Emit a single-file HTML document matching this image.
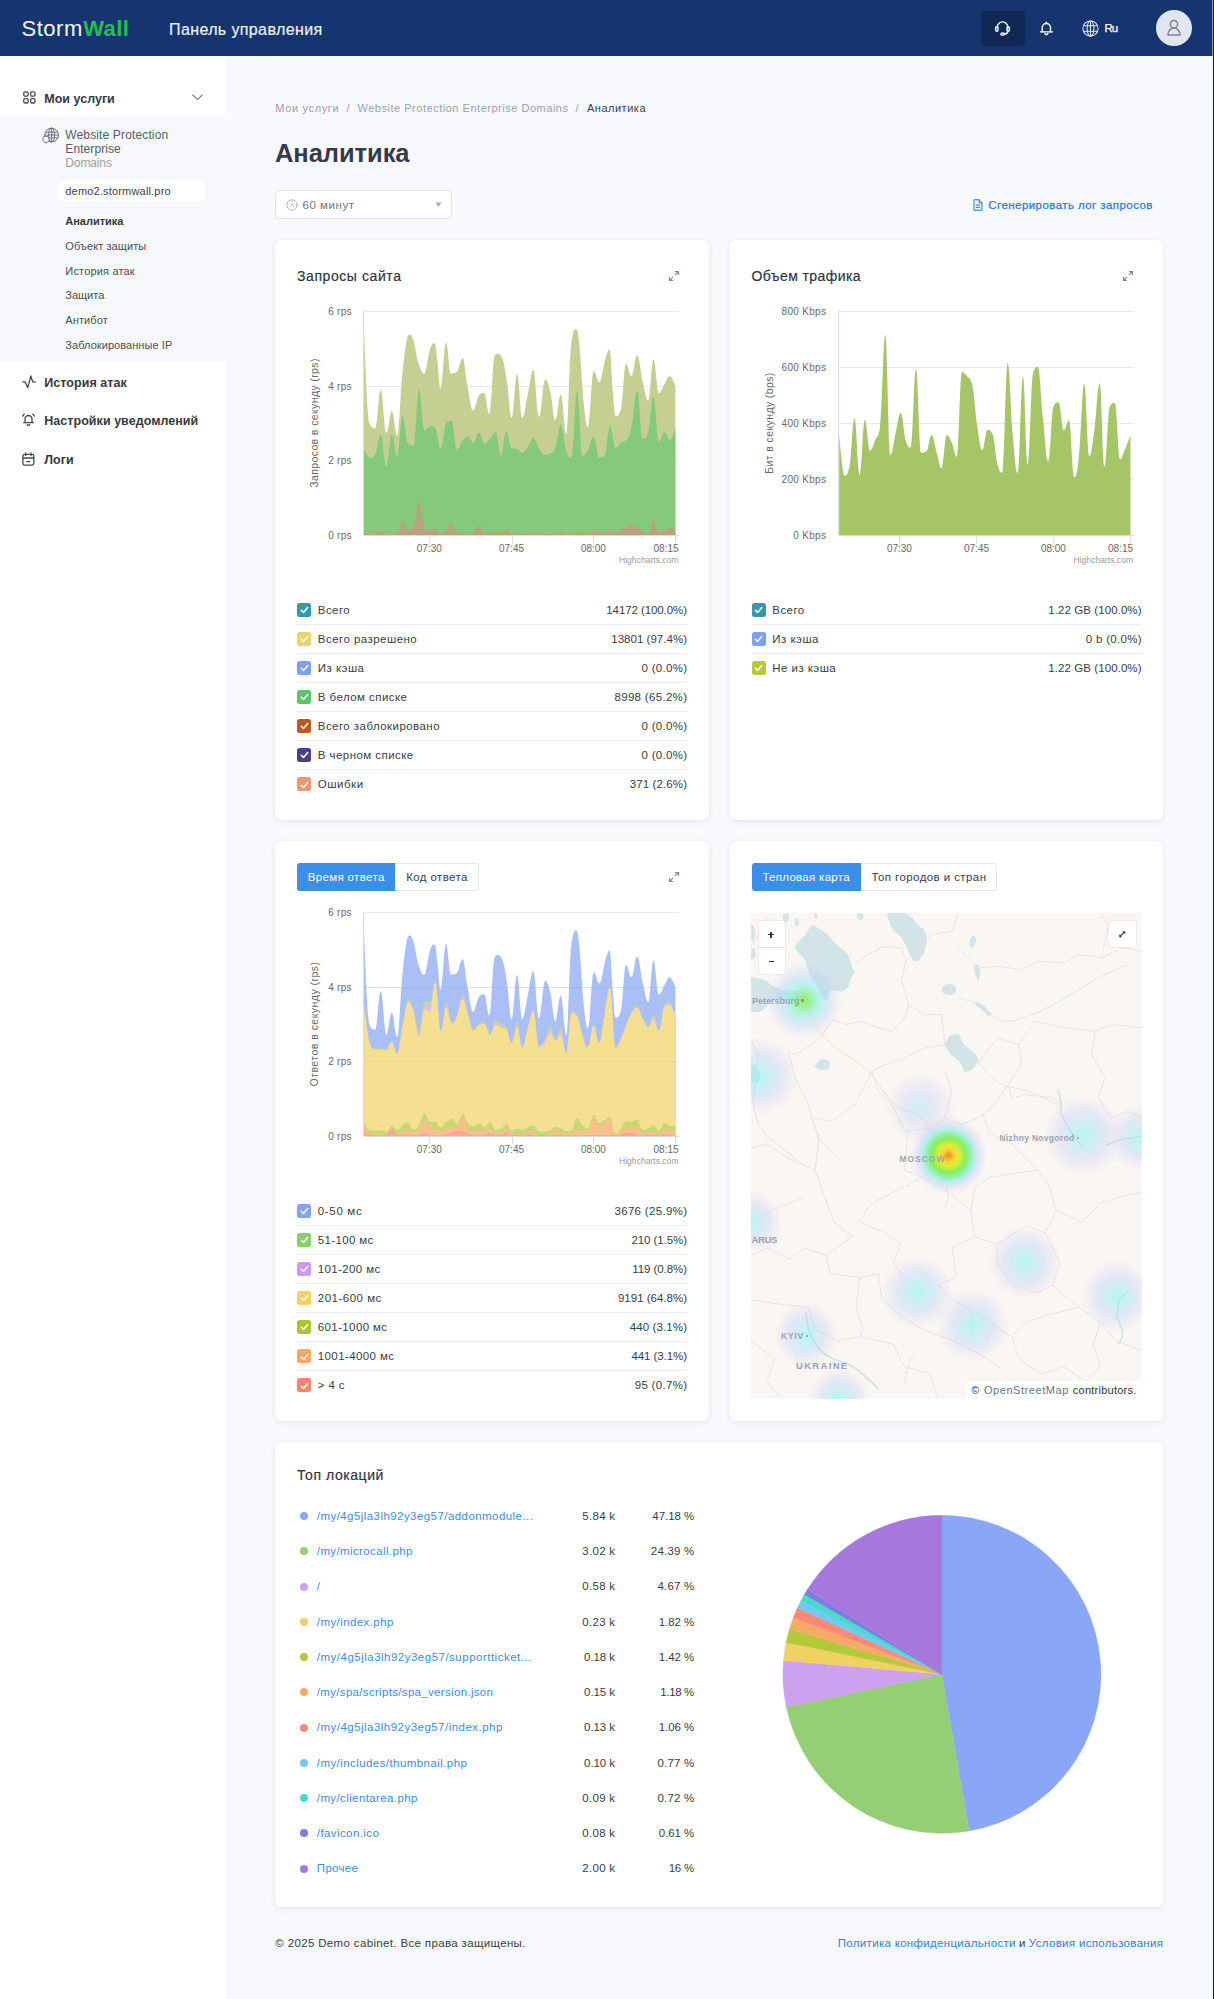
<!DOCTYPE html><html lang="ru"><head><meta charset="utf-8"><title>Аналитика</title><style>
*{box-sizing:border-box;margin:0;padding:0}
html,body{width:1214px;height:1999px;overflow:hidden;background:#f7f9fc;}
body{position:relative;font-family:"Liberation Sans",sans-serif;}
.t{position:absolute;white-space:nowrap;}
.b{position:absolute;}
svg{position:absolute;overflow:visible;}
.card{position:absolute;background:#fff;border-radius:6px;box-shadow:0 2px 6px rgba(60,80,130,.09),0 0 1px rgba(60,80,130,.10);}
</style></head><body>
<div class="b" style="left:0px;top:0px;width:1214px;height:56.3px;background:#16346f;"></div>
<div class="t" style="left:21.40px;top:13.90px;font-size:22px;line-height:29px;color:#f2f4f8;letter-spacing:0.565px;">Storm</div>
<div class="t" style="left:83.20px;top:13.90px;font-size:22px;line-height:29px;color:#1fc04f;font-weight:700;letter-spacing:0.398px;">Wall</div>
<div class="t" style="left:169.00px;top:18.90px;font-size:16px;line-height:21px;color:#eef1f7;letter-spacing:0.383px;-webkit-text-stroke:.2px #eef1f7;">Панель управления</div>
<div class="b" style="left:981px;top:11px;width:44px;height:35px;background:#112855;border-radius:4px;"></div>
<svg style="left:994px;top:20px" width="17" height="17" viewBox="0 0 17 17" fill="none" stroke="#fff" stroke-width="1.4" stroke-linecap="round" stroke-linejoin="round">
<path d="M3.2 8.2V7.2a5.3 5.3 0 0 1 10.6 0v1"/>
<rect x="1.6" y="6.6" width="2.4" height="4.6" rx="1.2"/>
<rect x="13" y="6.6" width="2.4" height="4.6" rx="1.2"/>
<path d="M13.8 11.2c0 1.6-1.4 2.6-3.4 2.8"/>
<ellipse cx="8.8" cy="14" rx="1.9" ry="1.1"/>
</svg>
<svg style="left:1037.8px;top:20px" width="17" height="17" viewBox="0 0 17 17" fill="none" stroke="#fff" stroke-width="1.4" stroke-linecap="round" stroke-linejoin="round">
<path d="M4.3 11.8V7.6a4.1 4.1 0 0 1 8.2 0v4.2"/>
<path d="M2.4 11.9h12"/>
<path d="M6.9 13.4a1.6 1.6 0 0 0 3 0"/>
<path d="M8.4 2.2v1.2"/>
</svg>
<svg style="left:1082px;top:19.5px" width="17" height="17" viewBox="0 0 17 17" fill="none" stroke="#e4e8f2" stroke-width="1.05">
<circle cx="8.5" cy="8.5" r="7.6"/>
<ellipse cx="8.5" cy="8.5" rx="3.4" ry="7.6"/>
<path d="M8.5 .9v15.2M1.5 5.7h14M1.5 11.3h14"/>
</svg>
<div class="t" style="left:1104.50px;top:21.20px;font-size:11.5px;line-height:15px;color:#fff;letter-spacing:-0.951px;-webkit-text-stroke:.25px #fff;">Ru</div>
<div class="b" style="left:1156px;top:10.4px;width:36px;height:36px;background:#e1e5ee;border-radius:50%;"></div>
<svg style="left:1165px;top:19.4px" width="18" height="18" viewBox="0 0 18 18" fill="none" stroke="#7c8492" stroke-width="1.5" stroke-linejoin="round">
<circle cx="9" cy="5.2" r="3.6"/>
<path d="M3 16.1c0-4.2 2.6-7.2 6-7.2s6 3 6 7.2z"/>
</svg>
<div class="b" style="left:1213px;top:56px;width:1px;height:1943px;background:#141b2e;"></div>
<div class="b" style="left:1212px;top:0px;width:1px;height:56px;background:#8f9fc4;"></div>
<div class="b" style="left:1213px;top:0px;width:1px;height:56px;background:#141b2e;"></div>
<div class="b" style="left:0px;top:56px;width:226px;height:1943px;background:#fff;"></div>
<div class="b" style="left:0px;top:116.5px;width:226px;height:245px;background:#f7f8fc;"></div>
<svg style="left:22.5px;top:91px" width="13" height="13" viewBox="0 0 13 13" fill="none" stroke="#444a57" stroke-width="1.3">
<rect x=".8" y=".8" width="4.3" height="4.3" rx="1.2"/><rect x="7.7" y=".8" width="4.3" height="4.3" rx="1.2"/>
<rect x=".8" y="7.7" width="4.3" height="4.3" rx="1.2"/><rect x="7.7" y="7.7" width="4.3" height="4.3" rx="1.2"/></svg>
<div class="t" style="left:44.30px;top:90.60px;font-size:12.5px;line-height:16px;color:#363940;font-weight:700;letter-spacing:0.008px;">Мои услуги</div>
<svg style="left:192px;top:93.5px" width="11" height="7" viewBox="0 0 11 7" fill="none" stroke="#777d8a" stroke-width="1.1" stroke-linecap="round" stroke-linejoin="round"><path d="M.8 1l4.7 4.6L10.2 1"/></svg>
<svg style="left:41.5px;top:127px" width="18" height="17" viewBox="0 0 18 17" fill="none" stroke="#6d7380" stroke-width="1">
<circle cx="9.6" cy="8" r="6.9"/><ellipse cx="9.6" cy="8" rx="3" ry="6.9"/>
<path d="M9.6 1.1v13.8M3.3 5.2h12.6M2.8 8h13.7M3.3 10.8h12.6"/>
<path d="M1 10.2l3-1 3 1v2.4c0 1.6-1.2 2.8-3 3.4-1.800-.6-3-1.800-3-3.400z" fill="#f7f8fc" stroke="#6d7380"/>
</svg>
<div class="t" style="left:65.30px;top:127.00px;font-size:12px;line-height:16px;color:#595c63;letter-spacing:0.139px;">Website Protection</div>
<div class="t" style="left:65.30px;top:140.50px;font-size:12px;line-height:16px;color:#595c63;letter-spacing:0.081px;">Enterprise</div>
<div class="t" style="left:65.30px;top:154.80px;font-size:12px;line-height:16px;color:#9d9fa6;letter-spacing:-0.122px;">Domains</div>
<div class="b" style="left:58px;top:180px;width:147px;height:21px;background:#fff;border-radius:4px;"></div>
<div class="t" style="left:65.30px;top:184.10px;font-size:11px;line-height:14px;color:#3e4046;letter-spacing:0.179px;">demo2.stormwall.pro</div>
<div class="t" style="left:65.30px;top:214.40px;font-size:11px;line-height:14px;color:#363940;font-weight:700;letter-spacing:-0.025px;">Аналитика</div>
<div class="t" style="left:65.30px;top:238.90px;font-size:11px;line-height:14px;color:#4c4e55;letter-spacing:0.091px;">Объект защиты</div>
<div class="t" style="left:65.30px;top:263.70px;font-size:11px;line-height:14px;color:#4c4e55;letter-spacing:0.172px;">История атак</div>
<div class="t" style="left:65.30px;top:288.40px;font-size:11px;line-height:14px;color:#4c4e55;">Защита</div>
<div class="t" style="left:65.30px;top:313.10px;font-size:11px;line-height:14px;color:#4c4e55;letter-spacing:0.099px;">Антибот</div>
<div class="t" style="left:65.30px;top:337.90px;font-size:11px;line-height:14px;color:#4c4e55;letter-spacing:0.062px;">Заблокированные IP</div>
<svg style="left:22px;top:374.5px" width="15" height="14" viewBox="0 0 15 14" fill="none" stroke="#444a57" stroke-width="1.3" stroke-linecap="round" stroke-linejoin="round"><path d="M.8 6.900H3L5.900 12.600 8.800 1 10.700 6.900h2.500"/></svg>
<div class="t" style="left:44.30px;top:374.60px;font-size:12.5px;line-height:16px;color:#363940;font-weight:700;letter-spacing:0.050px;">История атак</div>
<svg style="left:21px;top:412.3px" width="15" height="15" viewBox="0 0 15 15" fill="none" stroke="#444a57" stroke-width="1.3" stroke-linecap="round" stroke-linejoin="round">
<path d="M4 10.6V7a3.500 3.500 0 0 1 7 0v3.600"/><path d="M2.700 10.700h9.600"/><path d="M6.200 12.600a1.400 1.400 0 0 0 2.600 0"/><path d="M1.700 4l1.500-1.900M13.300 4l-1.500-1.900"/></svg>
<div class="t" style="left:44.30px;top:413.30px;font-size:12.5px;line-height:16px;color:#363940;font-weight:700;letter-spacing:0.041px;">Настройки уведомлений</div>
<svg style="left:22.3px;top:451.800px" width="13" height="14" viewBox="0 0 13 14" fill="none" stroke="#444a57" stroke-width="1.3" stroke-linecap="round" stroke-linejoin="round">
<rect x=".9" y="2.300" width="10.900" height="10.800" rx="1.800"/><path d="M.9 6h10.900M3.700 .8v2.600M9 .8v2.600M4.800 9.600h3"/></svg>
<div class="t" style="left:44.30px;top:452.00px;font-size:12.5px;line-height:16px;color:#363940;font-weight:700;letter-spacing:0.051px;">Логи</div>
<div class="t" style="left:275.30px;top:100.60px;font-size:11px;line-height:14px;color:#9ba1ad;letter-spacing:0.644px;">Мои услуги</div>
<div class="t" style="left:346.50px;top:100.60px;font-size:11px;line-height:14px;color:#9ba1ad;">/</div>
<div class="t" style="left:357.50px;top:100.60px;font-size:11px;line-height:14px;color:#9ba1ad;letter-spacing:0.520px;">Website Protection Enterprise Domains</div>
<div class="t" style="left:575.50px;top:100.60px;font-size:11px;line-height:14px;color:#9ba1ad;">/</div>
<div class="t" style="left:587.00px;top:100.60px;font-size:11px;line-height:14px;color:#3c4250;letter-spacing:0.506px;">Аналитика</div>
<div class="t" style="left:275.00px;top:137.30px;font-size:25.5px;line-height:33px;color:#343a49;font-weight:700;letter-spacing:-0.054px;">Аналитика</div>
<div class="b" style="left:275px;top:190px;width:176.5px;height:28.5px;background:#fff;border:1px solid #dbe5f9;border-radius:4px;"></div>
<svg style="left:286px;top:198.500px" width="12" height="12" viewBox="0 0 12 12" fill="none" stroke="#b0b4bd" stroke-width="1" stroke-linecap="round"><circle cx="6" cy="6" r="5.200"/><path d="M6 3.200V6l1.900 1.300"/></svg>
<div class="t" style="left:302.50px;top:197.90px;font-size:11.5px;line-height:15px;color:#70747e;letter-spacing:0.539px;">60 минут</div>
<svg style="left:434.500px;top:202px" width="7" height="5.500" viewBox="0 0 8 6"><path d="M.3 .3h7.400L4 5.700z" fill="#aeb2ba"/></svg>
<svg style="left:972.500px;top:198.500px" width="10" height="12" viewBox="0 0 10 12" fill="none" stroke="#1f70d2" stroke-width="1" stroke-linejoin="round"><path d="M1 .8h5.200L9 3.600v7.600H1z"/><path d="M6 .8v3h3M2.800 6h4.400M2.800 8.300h4.400"/></svg>
<div class="t" style="left:988.33px;top:197.50px;font-size:11.5px;line-height:15px;color:#2b7ad9;letter-spacing:0.432px;-webkit-text-stroke:.25px #2b7ad9;">Сгенерировать лог запросов</div>
<div class="card" style="left:275px;top:240px;width:433.5px;height:580px"></div>
<div class="card" style="left:730px;top:240px;width:433px;height:580px"></div>
<div class="card" style="left:275px;top:841px;width:433.5px;height:579.5px"></div>
<div class="card" style="left:730px;top:841px;width:433px;height:579.5px"></div>
<div class="card" style="left:275px;top:1442px;width:888px;height:465px"></div>
<div class="t" style="left:297.00px;top:266.60px;font-size:14px;line-height:18px;color:#2e3442;letter-spacing:0.577px;-webkit-text-stroke:.18px #2e3442;">Запросы сайта</div>
<svg style="left:667.5px;top:269.5px" width="12" height="12" viewBox="0 0 12 12" fill="none" stroke="#868d9a" stroke-width="1.15" stroke-linecap="round" stroke-linejoin="round"><path d="M7.300 1.500h3.200v3.200M10.300 1.700L7.100 4.900M4.700 10.500H1.500V7.300M1.700 10.300L4.900 7.100"/><path d="M10.500 1.500L8.200 1.700 10.300 3.800zM1.500 10.500L3.800 10.300 1.700 8.200z" fill="#868d9a" stroke-width=".6"/></svg>
<svg style="left:0;top:0" width="1214" height="1999"><path d="M364 311.5H679" stroke="#e9e9e9" stroke-width="1"/><path d="M364 386.5H679" stroke="#e9e9e9" stroke-width="1"/><path d="M364 460.5H679" stroke="#e9e9e9" stroke-width="1"/><path d="M364 535.5H679" stroke="#d3dcef" stroke-width="1"/><path d="M363.5 311V535" stroke="#d3dcef" stroke-width="1"/><path d="M429.5 535v8" stroke="#d3dcef" stroke-width="1"/><path d="M512.5 535v8" stroke="#d3dcef" stroke-width="1"/><path d="M593.5 535v8" stroke="#d3dcef" stroke-width="1"/><path d="M675.5 535v8" stroke="#d3dcef" stroke-width="1"/></svg>
<div class="t" style="left:328.20px;top:305.10px;font-size:10px;line-height:13px;color:#686868;letter-spacing:0.267px;">6 rps</div>
<div class="t" style="left:328.20px;top:379.77px;font-size:10px;line-height:13px;color:#686868;letter-spacing:0.267px;">4 rps</div>
<div class="t" style="left:328.20px;top:454.43px;font-size:10px;line-height:13px;color:#686868;letter-spacing:0.267px;">2 rps</div>
<div class="t" style="left:328.20px;top:529.10px;font-size:10px;line-height:13px;color:#686868;letter-spacing:0.267px;">0 rps</div>
<div class="t" style="left:416.80px;top:541.50px;font-size:10px;line-height:13px;color:#686868;">07:30</div>
<div class="t" style="left:499.00px;top:541.50px;font-size:10px;line-height:13px;color:#686868;">07:45</div>
<div class="t" style="left:580.90px;top:541.50px;font-size:10px;line-height:13px;color:#686868;">08:00</div>
<div class="t" style="left:653.50px;top:541.50px;font-size:10px;line-height:13px;color:#686868;">08:15</div>
<div class="t" style="left:619.03px;top:555.00px;font-size:8.5px;line-height:11px;color:#9a9a9a;letter-spacing:0.032px;">Highcharts.com</div>
<div class="t" style="left:244.4px;top:416.0px;width:140px;text-align:center;font-size:10.5px;line-height:14px;color:#686868;transform:rotate(-90deg);letter-spacing:0.38px">Запросов в секунду (rps)</div>
<svg style="left:0;top:0" width="1214" height="1999"><path d="M364.1 326.7 C364.1 326.7 367.2 417.9 369.3 423.1 C371.6 428.3 372.8 428.3 375.2 428.3 C377.4 428.3 378.5 389.7 380.7 389.7 C382.9 389.7 384.1 433.4 386.3 433.4 C388.5 433.4 389.6 411.2 391.8 411.2 C393.9 411.2 395.0 435.7 397.1 435.7 C399.3 435.7 400.4 389.4 402.6 371.2 C405.3 348.9 406.6 334.4 409.3 334.4 C411.1 334.4 412.0 335.9 413.8 341.5 C415.5 347.1 416.4 356.8 418.2 362.3 C420.6 369.6 421.8 373.7 424.1 373.7 C426.5 373.7 427.7 355.7 430.1 348.9 C432.0 343.5 432.9 343.3 434.8 343.3 C435.9 343.3 436.4 353.7 437.5 362.3 C438.7 371.8 439.3 388.5 440.4 388.5 C442.7 388.5 443.8 342.6 446.1 342.6 C448.0 342.6 448.9 373.4 450.8 373.4 C453.2 373.4 454.4 373.4 456.8 371.9 C459.1 370.4 460.3 358.1 462.7 358.1 C464.5 358.1 465.4 374.1 467.1 383.0 C469.5 395.0 470.7 410.5 473.1 410.5 C475.4 410.5 476.6 398.2 479.0 395.6 C481.1 393.1 482.1 393.1 484.2 393.1 C486.3 393.1 487.3 414.2 489.4 414.2 C491.4 414.2 492.5 359.0 494.6 356.3 C495.5 353.7 495.9 353.7 496.8 353.7 C499.2 353.7 500.3 353.7 502.7 359.3 C504.5 364.9 505.4 371.3 507.2 383.0 C508.9 394.7 509.8 417.9 511.6 417.9 C513.8 417.9 514.9 373.7 517.1 373.7 C519.1 373.7 520.2 417.9 522.2 417.9 C524.4 417.9 525.5 404.3 527.7 394.9 C530.0 385.2 531.1 370.0 533.3 370.0 C535.6 370.0 536.7 417.1 539.0 417.1 C541.5 417.1 542.7 379.6 545.2 379.6 C547.3 379.6 548.3 383.6 550.4 391.9 C552.4 399.8 553.3 420.1 555.3 420.1 C557.5 420.1 558.6 394.4 560.8 394.4 C563.0 394.4 564.1 434.2 566.3 434.2 C568.2 434.2 569.2 359.8 571.2 344.5 C573.2 329.2 574.3 329.2 576.3 329.2 C577.5 329.2 578.1 332.5 579.3 344.5 C581.1 362.4 582.0 386.8 583.8 403.8 C585.4 419.7 586.2 426.8 587.9 426.8 C590.2 426.8 591.4 370.9 593.7 370.9 C595.9 370.9 597.1 382.3 599.3 382.3 C601.7 382.3 602.9 366.9 605.3 359.3 C607.0 353.6 607.9 349.2 609.7 349.2 C610.9 349.2 611.5 375.5 612.7 389.0 C613.9 402.4 614.4 416.4 615.6 416.4 C617.7 416.4 618.7 416.4 620.8 409.7 C622.9 403.0 623.9 363.8 626.0 363.8 C628.2 363.8 629.3 376.1 631.5 376.1 C633.8 376.1 634.9 355.2 637.1 355.2 C639.5 355.2 640.7 373.3 643.1 383.0 C645.1 391.6 646.2 400.8 648.3 400.8 C650.3 400.8 651.4 359.3 653.4 359.3 C655.6 359.3 656.7 393.4 658.9 393.4 C661.2 393.4 662.3 387.4 664.6 383.8 C666.6 380.4 667.7 376.1 669.8 376.1 C672.0 376.1 675.4 386.0 675.4 386.0 L675.4 535.0 L364.1 535.0 Z" fill="#c5cf92"/><path d="M364.1 449.8 C364.1 449.8 367.6 457.9 370.0 457.9 C372.1 457.9 373.1 457.9 375.2 454.2 C377.4 450.5 378.5 434.9 380.7 434.9 C382.9 434.9 384.1 466.1 386.3 466.1 C388.5 466.1 389.6 434.2 391.8 434.2 C393.9 434.2 395.0 456.4 397.1 456.4 C399.3 456.4 400.4 415.7 402.6 415.7 C404.7 415.7 405.7 440.1 407.8 443.1 C410.1 446.0 411.2 446.0 413.5 446.0 C415.7 446.0 416.8 389.7 418.9 389.7 C421.2 389.7 422.3 430.5 424.6 430.5 C426.8 430.5 427.9 426.3 430.1 426.3 C432.1 426.3 433.2 426.3 435.3 427.5 C437.4 428.7 438.5 449.0 440.7 449.0 C443.0 449.0 444.1 423.8 446.4 422.3 C448.5 420.8 449.5 420.8 451.6 420.8 C453.8 420.8 454.9 449.8 457.1 449.8 C459.3 449.8 460.4 442.9 462.7 440.1 C464.8 437.6 465.8 436.4 467.9 436.4 C470.1 436.4 471.2 442.6 473.4 442.6 C475.6 442.6 476.7 432.7 479.0 432.7 C481.2 432.7 482.3 443.8 484.5 443.8 C486.7 443.8 487.9 440.9 490.1 438.6 C492.3 436.4 493.4 432.4 495.6 432.4 C497.7 432.4 498.8 454.9 500.9 454.9 C503.1 454.9 504.2 431.5 506.4 431.5 C508.5 431.5 509.5 447.5 511.6 448.3 C513.8 449.0 514.9 448.3 517.1 449.0 C519.1 449.8 520.2 452.7 522.2 452.7 C524.4 452.7 525.5 449.6 527.7 446.8 C530.0 443.9 531.1 438.6 533.3 438.6 C535.6 438.6 536.7 445.2 539.0 448.3 C541.5 451.7 542.7 454.9 545.2 454.9 C547.3 454.9 548.3 454.8 550.4 453.5 C552.4 452.2 553.3 453.5 555.3 448.3 C557.5 443.1 558.6 425.0 560.8 425.0 C563.0 425.0 564.1 445.0 566.3 451.2 C568.4 457.5 569.5 457.5 571.6 457.5 C573.8 457.5 574.9 391.6 577.1 391.6 C579.3 391.6 580.4 455.7 582.6 455.7 C584.7 455.7 585.8 453.3 587.9 449.8 C590.2 445.9 591.4 437.1 593.7 437.1 C595.8 437.1 596.9 457.5 599.0 457.5 C601.2 457.5 602.3 457.5 604.5 456.4 C606.7 455.4 607.8 426.0 610.0 426.0 C612.3 426.0 613.4 447.8 615.6 447.8 C617.8 447.8 618.9 444.3 621.1 442.6 C623.1 441.2 624.1 442.6 626.0 440.1 C628.2 437.6 629.3 437.3 631.5 427.5 C633.8 417.5 634.9 390.7 637.1 390.7 C639.3 390.7 640.4 438.6 642.6 438.6 C644.7 438.6 645.7 438.6 647.8 433.4 C650.1 428.3 651.2 397.1 653.4 397.1 C655.6 397.1 656.7 441.9 658.9 441.9 C661.2 441.9 662.3 432.0 664.6 432.0 C666.6 432.0 667.7 440.1 669.8 440.1 C672.0 440.1 675.4 429.0 675.4 429.0 L675.4 535.0 L364.1 535.0 Z" fill="#84c97c"/><path d="M364.1 532.8 C364.1 532.8 367.6 534.3 370.0 534.3 C372.1 534.3 373.1 534.3 375.2 534.0 C377.4 533.7 378.5 530.3 380.7 530.3 C382.9 530.3 384.1 534.7 386.3 534.7 C388.5 534.7 389.6 534.0 391.8 534.0 C393.9 534.0 395.0 534.0 397.1 534.0 C399.3 534.0 400.4 521.2 402.6 521.2 C404.7 521.2 405.7 530.3 407.8 530.3 C410.1 530.3 411.2 530.3 413.5 526.9 C415.7 523.4 416.8 502.8 418.9 502.8 C421.2 502.8 422.3 523.1 424.6 526.9 C426.8 530.6 427.9 530.6 430.1 530.6 C432.1 530.6 433.2 528.8 435.3 528.8 C437.4 528.8 438.5 534.3 440.7 534.3 C443.0 534.3 444.1 532.0 446.4 529.8 C448.5 527.8 449.5 523.6 451.6 523.6 C453.8 523.6 454.9 533.1 457.1 533.1 C459.3 533.1 460.4 532.5 462.7 532.5 C464.8 532.5 465.8 534.7 467.9 534.7 C470.1 534.7 471.2 534.7 473.4 533.5 C475.6 532.3 476.7 525.7 479.0 525.7 C481.2 525.7 482.3 534.3 484.5 534.3 C486.7 534.3 487.9 533.4 490.1 533.1 C492.3 532.7 493.4 532.5 495.6 532.5 C497.7 532.5 498.8 533.5 500.9 533.5 C503.1 533.5 504.2 528.8 506.4 528.8 C508.5 528.8 509.5 534.0 511.6 534.0 C513.8 534.0 514.9 533.5 517.1 533.5 C519.1 533.5 520.2 534.3 522.2 534.3 C524.4 534.3 525.5 533.5 527.7 533.5 C530.0 533.5 531.1 534.0 533.3 534.0 C535.6 534.0 536.7 533.5 539.0 533.5 C541.5 533.5 542.7 534.3 545.2 534.3 C547.3 534.3 548.3 534.0 550.4 534.0 C552.5 534.0 553.5 534.0 555.6 534.0 C557.7 534.0 558.7 532.0 560.8 532.0 C563.0 532.0 564.1 534.3 566.3 534.3 C568.5 534.3 569.6 534.3 571.9 534.3 C574.0 534.3 575.0 532.5 577.1 532.5 C579.3 532.5 580.4 533.2 582.6 533.5 C584.8 533.8 586.0 534.0 588.2 534.0 C590.4 534.0 591.5 532.0 593.7 532.0 C595.9 532.0 597.1 532.8 599.3 532.8 C601.4 532.8 602.4 532.8 604.5 532.8 C606.7 532.8 607.8 532.0 610.0 532.0 C612.3 532.0 613.4 534.0 615.6 534.0 C617.8 534.0 618.9 530.4 621.1 529.1 C623.1 527.9 624.1 528.5 626.0 527.9 C628.2 527.2 629.3 525.7 631.5 525.7 C633.8 525.7 634.9 525.7 637.1 526.6 C639.3 527.4 640.4 530.1 642.6 531.6 C644.9 533.1 646.0 534.0 648.3 534.0 C650.3 534.0 651.4 519.4 653.4 519.4 C655.6 519.4 656.7 534.0 658.9 534.0 C661.2 534.0 662.3 532.8 664.6 531.3 C666.6 529.9 667.7 526.9 669.8 526.9 C672.0 526.9 675.4 532.0 675.4 532.0 L675.4 535.0 L364.1 535.0 Z" fill="#bba27c"/></svg>
<div class="b" style="left:297px;top:602.5px;width:14px;height:14px;background:#3b97a7;border-radius:2.500px;"></div>
<svg style="left:299.8px;top:605.8px" width="9" height="8" viewBox="0 0 9 8" fill="none" stroke="#fff" stroke-width="1.500" stroke-linecap="round" stroke-linejoin="round"><path d="M1.300 4.200l2.200 2.200 4.200-4.800"/></svg>
<div class="t" style="left:317.80px;top:602.60px;font-size:11.5px;line-height:15px;color:#3a3c42;letter-spacing:0.452px;">Всего</div>
<div class="t" style="left:606.27px;top:602.60px;font-size:11.5px;line-height:15px;color:#3a3c42;letter-spacing:-0.086px;">14172 (100.0%)</div>
<div class="b" style="left:297px;top:624px;width:390px;height:1px;background:#e6ebf5;"></div>
<div class="b" style="left:297px;top:631.63px;width:14px;height:14px;background:#e7d46b;border-radius:2.500px;"></div>
<svg style="left:299.8px;top:634.9px" width="9" height="8" viewBox="0 0 9 8" fill="none" stroke="#fff" stroke-width="1.500" stroke-linecap="round" stroke-linejoin="round"><path d="M1.300 4.200l2.200 2.200 4.200-4.800"/></svg>
<div class="t" style="left:317.80px;top:631.73px;font-size:11.5px;line-height:15px;color:#3a3c42;letter-spacing:0.462px;">Всего разрешено</div>
<div class="t" style="left:611.23px;top:631.73px;font-size:11.5px;line-height:15px;color:#3a3c42;letter-spacing:0.027px;">13801 (97.4%)</div>
<div class="b" style="left:297px;top:653px;width:390px;height:1px;background:#e6ebf5;"></div>
<div class="b" style="left:297px;top:660.76px;width:14px;height:14px;background:#809ef4;border-radius:2.500px;"></div>
<svg style="left:299.8px;top:664.1px" width="9" height="8" viewBox="0 0 9 8" fill="none" stroke="#fff" stroke-width="1.500" stroke-linecap="round" stroke-linejoin="round"><path d="M1.300 4.200l2.200 2.200 4.200-4.800"/></svg>
<div class="t" style="left:317.80px;top:660.86px;font-size:11.5px;line-height:15px;color:#3a3c42;letter-spacing:0.465px;">Из кэша</div>
<div class="t" style="left:641.45px;top:660.86px;font-size:11.5px;line-height:15px;color:#3a3c42;letter-spacing:0.299px;">0 (0.0%)</div>
<div class="b" style="left:297px;top:682px;width:390px;height:1px;background:#e6ebf5;"></div>
<div class="b" style="left:297px;top:689.89px;width:14px;height:14px;background:#5ec365;border-radius:2.500px;"></div>
<svg style="left:299.8px;top:693.2px" width="9" height="8" viewBox="0 0 9 8" fill="none" stroke="#fff" stroke-width="1.500" stroke-linecap="round" stroke-linejoin="round"><path d="M1.300 4.200l2.200 2.200 4.200-4.800"/></svg>
<div class="t" style="left:317.80px;top:689.99px;font-size:11.5px;line-height:15px;color:#3a3c42;letter-spacing:0.447px;">В белом списке</div>
<div class="t" style="left:614.47px;top:689.99px;font-size:11.5px;line-height:15px;color:#3a3c42;letter-spacing:0.316px;">8998 (65.2%)</div>
<div class="b" style="left:297px;top:711px;width:390px;height:1px;background:#e6ebf5;"></div>
<div class="b" style="left:297px;top:719.02px;width:14px;height:14px;background:#b95b24;border-radius:2.500px;"></div>
<svg style="left:299.8px;top:722.3px" width="9" height="8" viewBox="0 0 9 8" fill="none" stroke="#fff" stroke-width="1.500" stroke-linecap="round" stroke-linejoin="round"><path d="M1.300 4.200l2.200 2.200 4.200-4.800"/></svg>
<div class="t" style="left:317.80px;top:719.12px;font-size:11.5px;line-height:15px;color:#3a3c42;letter-spacing:0.449px;">Всего заблокировано</div>
<div class="t" style="left:641.45px;top:719.12px;font-size:11.5px;line-height:15px;color:#3a3c42;letter-spacing:0.299px;">0 (0.0%)</div>
<div class="b" style="left:297px;top:740px;width:390px;height:1px;background:#e6ebf5;"></div>
<div class="b" style="left:297px;top:748.15px;width:14px;height:14px;background:#4c4083;border-radius:2.500px;"></div>
<svg style="left:299.8px;top:751.4px" width="9" height="8" viewBox="0 0 9 8" fill="none" stroke="#fff" stroke-width="1.500" stroke-linecap="round" stroke-linejoin="round"><path d="M1.300 4.200l2.200 2.200 4.200-4.800"/></svg>
<div class="t" style="left:317.80px;top:748.25px;font-size:11.5px;line-height:15px;color:#3a3c42;letter-spacing:0.446px;">В черном списке</div>
<div class="t" style="left:641.45px;top:748.25px;font-size:11.5px;line-height:15px;color:#3a3c42;letter-spacing:0.299px;">0 (0.0%)</div>
<div class="b" style="left:297px;top:769px;width:390px;height:1px;background:#e6ebf5;"></div>
<div class="b" style="left:297px;top:777.28px;width:14px;height:14px;background:#e9967b;border-radius:2.500px;"></div>
<svg style="left:299.8px;top:780.6px" width="9" height="8" viewBox="0 0 9 8" fill="none" stroke="#fff" stroke-width="1.500" stroke-linecap="round" stroke-linejoin="round"><path d="M1.300 4.200l2.200 2.200 4.200-4.800"/></svg>
<div class="t" style="left:317.80px;top:777.38px;font-size:11.5px;line-height:15px;color:#3a3c42;letter-spacing:0.533px;">Ошибки</div>
<div class="t" style="left:629.67px;top:777.38px;font-size:11.5px;line-height:15px;color:#3a3c42;letter-spacing:0.119px;">371 (2.6%)</div>
<div class="t" style="left:751.50px;top:266.60px;font-size:14px;line-height:18px;color:#2e3442;letter-spacing:0.420px;-webkit-text-stroke:.18px #2e3442;">Объем трафика</div>
<svg style="left:1122px;top:269.5px" width="12" height="12" viewBox="0 0 12 12" fill="none" stroke="#868d9a" stroke-width="1.15" stroke-linecap="round" stroke-linejoin="round"><path d="M7.300 1.500h3.200v3.200M10.300 1.700L7.100 4.900M4.700 10.500H1.500V7.300M1.700 10.300L4.900 7.100"/><path d="M10.500 1.500L8.200 1.700 10.300 3.800zM1.500 10.500L3.800 10.300 1.700 8.200z" fill="#868d9a" stroke-width=".6"/></svg>
<svg style="left:0;top:0" width="1214" height="1999"><path d="M839 311.5H1134" stroke="#e9e9e9" stroke-width="1"/><path d="M839 367.5H1134" stroke="#e9e9e9" stroke-width="1"/><path d="M839 423.5H1134" stroke="#e9e9e9" stroke-width="1"/><path d="M839 479.5H1134" stroke="#e9e9e9" stroke-width="1"/><path d="M839 535.5H1134" stroke="#d3dcef" stroke-width="1"/><path d="M838.5 311V535" stroke="#d3dcef" stroke-width="1"/><path d="M899.5 535v8" stroke="#d3dcef" stroke-width="1"/><path d="M976.5 535v8" stroke="#d3dcef" stroke-width="1"/><path d="M1053.5 535v8" stroke="#d3dcef" stroke-width="1"/><path d="M1130.5 535v8" stroke="#d3dcef" stroke-width="1"/></svg>
<div class="t" style="left:781.52px;top:305.10px;font-size:10px;line-height:13px;color:#686868;letter-spacing:0.317px;">800 Kbps</div>
<div class="t" style="left:781.52px;top:361.10px;font-size:10px;line-height:13px;color:#686868;letter-spacing:0.317px;">600 Kbps</div>
<div class="t" style="left:781.52px;top:417.10px;font-size:10px;line-height:13px;color:#686868;letter-spacing:0.317px;">400 Kbps</div>
<div class="t" style="left:781.52px;top:473.10px;font-size:10px;line-height:13px;color:#686868;letter-spacing:0.317px;">200 Kbps</div>
<div class="t" style="left:793.31px;top:529.10px;font-size:10px;line-height:13px;color:#686868;letter-spacing:0.311px;">0 Kbps</div>
<div class="t" style="left:886.90px;top:541.50px;font-size:10px;line-height:13px;color:#686868;">07:30</div>
<div class="t" style="left:964.00px;top:541.50px;font-size:10px;line-height:13px;color:#686868;">07:45</div>
<div class="t" style="left:1040.90px;top:541.50px;font-size:10px;line-height:13px;color:#686868;">08:00</div>
<div class="t" style="left:1107.99px;top:541.50px;font-size:10px;line-height:13px;color:#686868;">08:15</div>
<div class="t" style="left:1073.53px;top:555.00px;font-size:8.5px;line-height:11px;color:#9a9a9a;letter-spacing:0.032px;">Highcharts.com</div>
<div class="t" style="left:709.2px;top:416.0px;width:120px;text-align:center;font-size:10.5px;line-height:14px;color:#686868;transform:rotate(-90deg);letter-spacing:0.39px">Бит в секунду (bps)</div>
<svg style="left:0;top:0" width="1214" height="1999"><path d="M839.2 433.4 C839.2 433.4 842.3 475.7 844.4 475.7 C846.3 475.7 847.3 475.7 849.3 467.5 C851.4 459.4 852.4 418.6 854.5 418.6 C856.5 418.6 857.6 475.0 859.7 475.0 C861.7 475.0 862.8 420.1 864.8 420.1 C866.9 420.1 868.0 450.9 870.0 450.9 C872.1 450.9 873.1 445.2 875.2 440.1 C877.2 435.3 878.2 440.1 880.1 426.0 C882.2 411.9 883.2 335.1 885.3 335.1 C887.3 335.1 888.3 454.9 890.3 454.9 C892.4 454.9 893.5 441.8 895.5 433.4 C897.6 425.1 898.6 413.0 900.7 413.0 C902.8 413.0 903.8 434.2 905.9 440.9 C907.9 447.5 908.9 447.5 910.8 447.5 C912.9 447.5 913.9 368.9 916.0 368.9 C918.1 368.9 919.1 452.7 921.2 452.7 C923.3 452.7 924.3 452.7 926.4 451.5 C928.5 450.3 929.5 434.9 931.6 434.9 C933.6 434.9 934.7 445.7 936.8 452.7 C938.7 459.1 939.6 468.3 941.5 468.3 C943.6 468.3 944.7 434.9 946.8 434.9 C948.9 434.9 949.9 438.6 951.9 443.1 C953.8 447.4 954.8 456.9 956.8 456.9 C958.8 456.9 959.9 371.9 962.0 371.9 C964.0 371.9 965.1 373.9 967.1 376.4 C969.1 378.7 970.1 376.4 972.0 383.8 C974.1 391.2 975.2 412.5 977.2 426.0 C979.2 439.0 980.2 450.0 982.2 450.0 C984.3 450.0 985.3 429.7 987.4 429.7 C989.5 429.7 990.5 429.7 992.6 434.2 C994.6 438.6 995.5 456.8 997.5 464.6 C999.4 472.2 1000.3 472.7 1002.2 472.7 C1004.4 472.7 1005.5 363.0 1007.7 363.0 C1009.7 363.0 1010.7 412.0 1012.6 433.4 C1014.7 456.2 1015.7 473.5 1017.8 473.5 C1019.9 473.5 1020.9 376.4 1023.0 376.4 C1024.9 376.4 1025.8 464.6 1027.7 464.6 C1029.8 464.6 1030.9 381.5 1032.9 374.1 C1034.9 366.7 1035.9 366.7 1037.8 366.7 C1039.9 366.7 1040.9 399.6 1043.0 418.6 C1045.1 437.6 1046.1 461.6 1048.2 461.6 C1050.3 461.6 1051.3 411.2 1053.4 406.8 C1055.5 402.3 1056.5 402.3 1058.6 402.3 C1060.7 402.3 1061.7 430.5 1063.8 430.5 C1065.8 430.5 1066.9 420.1 1069.0 420.1 C1071.0 420.1 1072.1 477.2 1074.2 477.2 C1076.1 477.2 1077.1 473.8 1079.0 455.7 C1081.1 436.5 1082.2 383.8 1084.2 383.8 C1086.3 383.8 1087.3 456.4 1089.4 456.4 C1091.4 456.4 1092.4 443.4 1094.5 429.0 C1096.5 414.2 1097.6 383.3 1099.7 383.3 C1101.6 383.3 1102.6 466.8 1104.5 466.8 C1106.6 466.8 1107.7 410.5 1109.7 406.8 C1111.8 403.0 1112.9 403.0 1114.9 403.0 C1117.0 403.0 1118.0 459.4 1120.1 459.4 C1122.2 459.4 1123.2 453.0 1125.3 448.3 C1127.4 443.5 1130.5 435.7 1130.5 435.7 L1130.5 535.0 L839.2 535.0 Z" fill="#a5c566"/></svg>
<div class="b" style="left:751.5px;top:602.5px;width:14px;height:14px;background:#3b97a7;border-radius:2.500px;"></div>
<svg style="left:754.3px;top:605.8px" width="9" height="8" viewBox="0 0 9 8" fill="none" stroke="#fff" stroke-width="1.500" stroke-linecap="round" stroke-linejoin="round"><path d="M1.300 4.200l2.200 2.200 4.200-4.800"/></svg>
<div class="t" style="left:772.30px;top:602.60px;font-size:11.5px;line-height:15px;color:#3a3c42;letter-spacing:0.452px;">Всего</div>
<div class="t" style="left:1048.26px;top:602.60px;font-size:11.5px;line-height:15px;color:#3a3c42;letter-spacing:0.079px;">1.22 GB (100.0%)</div>
<div class="b" style="left:751.5px;top:624px;width:390.0px;height:1px;background:#e6ebf5;"></div>
<div class="b" style="left:751.5px;top:631.63px;width:14px;height:14px;background:#809ef4;border-radius:2.500px;"></div>
<svg style="left:754.3px;top:634.9px" width="9" height="8" viewBox="0 0 9 8" fill="none" stroke="#fff" stroke-width="1.500" stroke-linecap="round" stroke-linejoin="round"><path d="M1.300 4.200l2.200 2.200 4.200-4.800"/></svg>
<div class="t" style="left:772.30px;top:631.73px;font-size:11.5px;line-height:15px;color:#3a3c42;letter-spacing:0.465px;">Из кэша</div>
<div class="t" style="left:1085.82px;top:631.73px;font-size:11.5px;line-height:15px;color:#3a3c42;letter-spacing:0.292px;">0 b (0.0%)</div>
<div class="b" style="left:751.5px;top:653px;width:390.0px;height:1px;background:#e6ebf5;"></div>
<div class="b" style="left:751.5px;top:660.76px;width:14px;height:14px;background:#b6ca36;border-radius:2.500px;"></div>
<svg style="left:754.3px;top:664.1px" width="9" height="8" viewBox="0 0 9 8" fill="none" stroke="#fff" stroke-width="1.500" stroke-linecap="round" stroke-linejoin="round"><path d="M1.300 4.200l2.200 2.200 4.200-4.800"/></svg>
<div class="t" style="left:772.30px;top:660.86px;font-size:11.5px;line-height:15px;color:#3a3c42;letter-spacing:0.446px;">Не из кэша</div>
<div class="t" style="left:1048.26px;top:660.86px;font-size:11.5px;line-height:15px;color:#3a3c42;letter-spacing:0.079px;">1.22 GB (100.0%)</div>
<div class="b" style="left:297px;top:862.6px;width:98px;height:28.5px;background:#3b8fe8;border-radius:3px 0 0 3px;"></div>
<div class="t" style="left:307.68px;top:869.55px;font-size:11.5px;line-height:15px;color:#fff;letter-spacing:0.356px;">Время ответа</div>
<div class="b" style="left:395px;top:862.6px;width:83.5px;height:28.5px;background:#fff;border:1px solid #e3e7ef;border-left:none;border-radius:0 3px 3px 0;"></div>
<div class="t" style="left:406.19px;top:869.55px;font-size:11.5px;line-height:15px;color:#3a3c42;letter-spacing:0.381px;">Код ответа</div>
<svg style="left:667.5px;top:870.5px" width="12" height="12" viewBox="0 0 12 12" fill="none" stroke="#868d9a" stroke-width="1.15" stroke-linecap="round" stroke-linejoin="round"><path d="M7.300 1.500h3.200v3.200M10.300 1.700L7.100 4.900M4.700 10.500H1.500V7.300M1.700 10.300L4.900 7.100"/><path d="M10.500 1.500L8.200 1.700 10.300 3.800zM1.500 10.500L3.800 10.300 1.700 8.200z" fill="#868d9a" stroke-width=".6"/></svg>
<svg style="left:0;top:0" width="1214" height="1999"><path d="M364 912.5H679" stroke="#e9e9e9" stroke-width="1"/><path d="M364 987.5H679" stroke="#e9e9e9" stroke-width="1"/><path d="M364 1061.5H679" stroke="#e9e9e9" stroke-width="1"/><path d="M364 1136.5H679" stroke="#d3dcef" stroke-width="1"/><path d="M363.5 912V1136" stroke="#d3dcef" stroke-width="1"/><path d="M429.5 1136v8" stroke="#d3dcef" stroke-width="1"/><path d="M512.5 1136v8" stroke="#d3dcef" stroke-width="1"/><path d="M593.5 1136v8" stroke="#d3dcef" stroke-width="1"/><path d="M675.5 1136v8" stroke="#d3dcef" stroke-width="1"/></svg>
<div class="t" style="left:328.20px;top:906.10px;font-size:10px;line-height:13px;color:#686868;letter-spacing:0.267px;">6 rps</div>
<div class="t" style="left:328.20px;top:980.77px;font-size:10px;line-height:13px;color:#686868;letter-spacing:0.267px;">4 rps</div>
<div class="t" style="left:328.20px;top:1055.43px;font-size:10px;line-height:13px;color:#686868;letter-spacing:0.267px;">2 rps</div>
<div class="t" style="left:328.20px;top:1130.10px;font-size:10px;line-height:13px;color:#686868;letter-spacing:0.267px;">0 rps</div>
<div class="t" style="left:416.80px;top:1142.50px;font-size:10px;line-height:13px;color:#686868;">07:30</div>
<div class="t" style="left:499.00px;top:1142.50px;font-size:10px;line-height:13px;color:#686868;">07:45</div>
<div class="t" style="left:580.90px;top:1142.50px;font-size:10px;line-height:13px;color:#686868;">08:00</div>
<div class="t" style="left:653.50px;top:1142.50px;font-size:10px;line-height:13px;color:#686868;">08:15</div>
<div class="t" style="left:619.03px;top:1156.00px;font-size:8.5px;line-height:11px;color:#9a9a9a;letter-spacing:0.032px;">Highcharts.com</div>
<div class="t" style="left:244.4px;top:1017.0px;width:140px;text-align:center;font-size:10.5px;line-height:14px;color:#686868;transform:rotate(-90deg);letter-spacing:0.47px">Ответов в секунду (rps)</div>
<svg style="left:0;top:0" width="1214" height="1999"><path d="M364.1 927.9 C364.1 927.9 367.2 1019.1 369.3 1024.3 C371.6 1029.5 372.8 1029.5 375.2 1029.5 C377.4 1029.5 378.5 990.9 380.7 990.9 C382.9 990.9 384.1 1034.6 386.3 1034.6 C388.5 1034.6 389.6 1012.4 391.8 1012.4 C393.9 1012.4 395.0 1036.9 397.1 1036.9 C399.3 1036.9 400.4 990.6 402.6 972.4 C405.3 950.1 406.6 935.6 409.3 935.6 C411.1 935.6 412.0 937.1 413.8 942.7 C415.5 948.3 416.4 958.0 418.2 963.5 C420.6 970.8 421.8 974.9 424.1 974.9 C426.5 974.9 427.7 956.9 430.1 950.1 C432.0 944.7 432.9 944.5 434.8 944.5 C435.9 944.5 436.4 954.9 437.5 963.5 C438.7 973.0 439.3 989.7 440.4 989.7 C442.7 989.7 443.8 943.8 446.1 943.8 C448.0 943.8 448.9 974.6 450.8 974.6 C453.2 974.6 454.4 974.6 456.8 973.1 C459.1 971.6 460.3 959.3 462.7 959.3 C464.5 959.3 465.4 975.3 467.1 984.2 C469.5 996.2 470.7 1011.7 473.1 1011.7 C475.4 1011.7 476.6 999.4 479.0 996.8 C481.1 994.3 482.1 994.3 484.2 994.3 C486.3 994.3 487.3 1015.4 489.4 1015.4 C491.4 1015.4 492.5 960.2 494.6 957.5 C495.5 954.9 495.9 954.9 496.8 954.9 C499.2 954.9 500.3 954.9 502.7 960.5 C504.5 966.1 505.4 972.5 507.2 984.2 C508.9 995.9 509.8 1019.1 511.6 1019.1 C513.8 1019.1 514.9 974.9 517.1 974.9 C519.1 974.9 520.2 1019.1 522.2 1019.1 C524.4 1019.1 525.5 1005.5 527.7 996.1 C530.0 986.4 531.1 971.2 533.3 971.2 C535.6 971.2 536.7 1018.3 539.0 1018.3 C541.5 1018.3 542.7 980.8 545.2 980.8 C547.3 980.8 548.3 984.8 550.4 993.1 C552.4 1001.0 553.3 1021.3 555.3 1021.3 C557.5 1021.3 558.6 995.6 560.8 995.6 C563.0 995.6 564.1 1035.4 566.3 1035.4 C568.2 1035.4 569.2 961.0 571.2 945.7 C573.2 930.4 574.3 930.4 576.3 930.4 C577.5 930.4 578.1 933.7 579.3 945.7 C581.1 963.6 582.0 988.0 583.8 1005.0 C585.4 1020.9 586.2 1028.0 587.9 1028.0 C590.2 1028.0 591.4 972.1 593.7 972.1 C595.9 972.1 597.1 983.5 599.3 983.5 C601.7 983.5 602.9 968.1 605.3 960.5 C607.0 954.8 607.9 950.4 609.7 950.4 C610.9 950.4 611.5 976.7 612.7 990.2 C613.9 1003.6 614.4 1017.6 615.6 1017.6 C617.7 1017.6 618.7 1017.6 620.8 1010.9 C622.9 1004.2 623.9 965.0 626.0 965.0 C628.2 965.0 629.3 977.3 631.5 977.3 C633.8 977.3 634.9 956.4 637.1 956.4 C639.5 956.4 640.7 974.5 643.1 984.2 C645.1 992.8 646.2 1002.0 648.3 1002.0 C650.3 1002.0 651.4 960.5 653.4 960.5 C655.6 960.5 656.7 994.6 658.9 994.6 C661.2 994.6 662.3 988.6 664.6 985.0 C666.6 981.6 667.7 977.3 669.8 977.3 C672.0 977.3 675.4 987.2 675.4 987.2 L675.4 1136.0 L364.1 1136.0 Z" fill="#abbff7"/><path d="M364.1 1003.0 C364.1 1003.0 367.2 1034.6 369.3 1041.6 C371.6 1048.6 372.8 1048.6 375.2 1048.6 C377.4 1048.6 378.5 1048.3 380.7 1048.3 C382.9 1048.3 384.1 1049.3 386.3 1049.3 C388.5 1049.3 389.6 1041.6 391.8 1041.6 C393.9 1041.6 395.0 1053.5 397.1 1053.5 C399.3 1053.5 400.4 1035.2 402.6 1024.5 C405.0 1013.1 406.2 998.2 408.6 998.2 C410.6 998.2 411.7 1004.1 413.8 1010.5 C415.8 1016.8 416.9 1029.7 418.9 1029.7 C421.2 1029.7 422.3 1001.6 424.6 1001.6 C426.8 1001.6 427.9 1001.6 430.1 1001.6 C432.1 1001.6 433.2 981.3 435.3 981.3 C437.4 981.3 438.5 1030.5 440.7 1030.5 C443.0 1030.5 444.1 1002.3 446.4 1002.3 C448.5 1002.3 449.5 1021.6 451.6 1021.6 C453.6 1021.6 454.7 1020.6 456.8 1015.7 C459.1 1010.0 460.3 994.9 462.7 994.9 C464.8 994.9 465.8 1005.9 467.9 1012.7 C470.1 1019.8 471.2 1029.7 473.4 1029.7 C475.6 1029.7 476.7 1024.4 479.0 1023.5 C481.2 1022.6 482.3 1022.6 484.5 1022.6 C486.7 1022.6 487.9 1034.2 490.1 1034.2 C492.3 1034.2 493.4 1020.1 495.6 1020.1 C497.7 1020.1 498.8 1021.7 500.9 1023.1 C503.1 1024.4 504.2 1023.1 506.4 1026.8 C508.5 1030.5 509.5 1041.9 511.6 1041.9 C513.8 1041.9 514.9 1022.3 517.1 1022.3 C519.1 1022.3 520.2 1046.8 522.2 1046.8 C524.4 1046.8 525.5 1035.4 527.7 1028.3 C530.0 1020.9 531.1 1010.5 533.3 1010.5 C535.6 1010.5 536.7 1045.6 539.0 1045.6 C541.2 1045.6 542.3 1044.0 544.5 1040.1 C546.7 1036.1 547.8 1026.0 550.1 1026.0 C552.3 1026.0 553.4 1038.6 555.6 1038.6 C557.7 1038.6 558.7 1027.5 560.8 1027.5 C563.0 1027.5 564.1 1052.0 566.3 1052.0 C568.4 1052.0 569.5 1010.5 571.6 1010.5 C573.8 1010.5 574.9 1010.5 577.1 1014.2 C579.3 1017.9 580.4 1028.6 582.6 1035.2 C584.7 1041.7 585.8 1046.8 587.9 1046.8 C590.2 1046.8 591.4 1023.8 593.7 1023.8 C595.9 1023.8 597.1 1041.9 599.3 1041.9 C601.4 1041.9 602.4 1025.3 604.5 1014.5 C606.7 1003.0 607.8 986.0 610.0 986.0 C612.3 986.0 613.4 1046.0 615.6 1046.0 C617.8 1046.0 618.9 1042.4 621.1 1037.9 C623.1 1033.9 624.1 1029.7 626.0 1024.8 C628.2 1019.4 629.3 1015.8 631.5 1011.9 C633.8 1008.0 634.9 1005.3 637.1 1005.3 C639.3 1005.3 640.4 1013.0 642.6 1017.1 C644.9 1021.3 646.0 1026.0 648.3 1026.0 C650.3 1026.0 651.4 1014.2 653.4 1014.2 C655.6 1014.2 656.7 1029.7 658.9 1029.7 C661.2 1029.7 662.3 1005.3 664.6 1003.8 C666.6 1002.3 667.7 1002.3 669.8 1002.3 C672.0 1002.3 675.4 1015.7 675.4 1015.7 L675.4 1136.0 L364.1 1136.0 Z" fill="#b4dc9c"/><path d="M364.1 1003.4 C364.1 1003.4 367.2 1034.8 369.3 1041.9 C371.6 1049.1 372.8 1049.1 375.2 1049.1 C377.4 1049.1 378.5 1048.8 380.7 1048.8 C382.9 1048.8 384.1 1049.8 386.3 1049.8 C388.5 1049.8 389.6 1041.9 391.8 1041.9 C393.9 1041.9 395.0 1053.8 397.1 1053.8 C399.3 1053.8 400.4 1035.5 402.6 1025.2 C405.0 1014.0 406.2 1000.0 408.6 1000.0 C410.6 1000.0 411.7 1004.9 413.8 1011.5 C415.8 1018.0 416.9 1032.7 418.9 1032.7 C421.2 1032.7 422.3 1005.2 424.6 1005.2 C426.8 1005.2 427.9 1005.9 430.1 1005.9 C432.1 1005.9 433.2 982.1 435.3 982.1 C437.4 982.1 438.5 1030.8 440.7 1030.8 C443.0 1030.8 444.1 1004.6 446.4 1004.6 C448.5 1004.6 449.5 1022.6 451.6 1022.6 C453.6 1022.6 454.7 1021.1 456.8 1016.3 C459.1 1010.8 460.3 996.9 462.7 996.9 C464.8 996.9 465.8 1006.9 467.9 1013.4 C470.1 1020.2 471.2 1030.1 473.4 1030.1 C475.6 1030.1 476.7 1025.5 479.0 1024.3 C481.2 1023.2 482.3 1023.2 484.5 1023.2 C486.7 1023.2 487.9 1034.5 490.1 1034.5 C492.3 1034.5 493.4 1022.4 495.6 1022.4 C497.7 1022.4 498.8 1023.9 500.9 1025.1 C503.1 1026.2 504.2 1025.1 506.4 1028.1 C508.5 1031.1 509.5 1042.4 511.6 1042.4 C513.8 1042.4 514.9 1024.7 517.1 1024.7 C519.1 1024.7 520.2 1047.1 522.2 1047.1 C524.4 1047.1 525.5 1035.8 527.7 1028.6 C530.0 1021.2 531.1 1010.8 533.3 1010.8 C535.6 1010.8 536.7 1046.1 539.0 1046.1 C541.2 1046.1 542.3 1044.8 544.5 1041.4 C546.7 1038.1 547.8 1029.4 550.1 1029.4 C552.3 1029.4 553.4 1039.6 555.6 1039.6 C557.7 1039.6 558.7 1030.8 560.8 1030.8 C563.0 1030.8 564.1 1052.6 566.3 1052.6 C568.4 1052.6 569.5 1011.8 571.6 1011.8 C573.8 1011.8 574.9 1011.8 577.1 1015.2 C579.3 1018.5 580.4 1029.3 582.6 1035.8 C584.7 1042.1 585.8 1047.1 587.9 1047.1 C590.2 1047.1 591.4 1024.8 593.7 1024.8 C595.9 1024.8 597.1 1042.4 599.3 1042.4 C601.4 1042.4 602.4 1025.8 604.5 1015.0 C606.7 1003.6 607.8 987.0 610.0 987.0 C612.3 987.0 613.4 1047.0 615.6 1047.0 C617.8 1047.0 618.9 1042.8 621.1 1038.2 C623.1 1034.1 624.1 1030.2 626.0 1025.4 C628.2 1020.0 629.3 1016.3 631.5 1012.6 C633.8 1008.8 634.9 1006.5 637.1 1006.5 C639.3 1006.5 640.4 1013.8 642.6 1017.8 C644.9 1021.9 646.0 1026.6 648.3 1026.6 C650.3 1026.6 651.4 1016.5 653.4 1016.5 C655.6 1016.5 656.7 1030.4 658.9 1030.4 C661.2 1030.4 662.3 1006.6 664.6 1005.1 C666.6 1003.6 667.7 1003.6 669.8 1003.6 C672.0 1003.6 675.4 1016.3 675.4 1016.3 L675.4 1136.0 L364.1 1136.0 Z" fill="#dcbcf0"/><path d="M364.1 1003.8 C364.1 1003.8 367.2 1034.9 369.3 1042.3 C371.6 1049.8 372.8 1049.8 375.2 1049.8 C377.4 1049.8 378.5 1049.5 380.7 1049.5 C382.9 1049.5 384.1 1050.5 386.3 1050.5 C388.5 1050.5 389.6 1042.3 391.8 1042.3 C393.9 1042.3 395.0 1054.2 397.1 1054.2 C399.3 1054.2 400.4 1036.0 402.6 1026.0 C405.0 1015.2 406.2 1002.3 408.6 1002.3 C410.6 1002.3 411.7 1005.9 413.8 1012.7 C415.8 1019.5 416.9 1036.4 418.9 1036.4 C421.2 1036.4 422.3 1009.7 424.6 1009.7 C426.8 1009.7 427.9 1011.2 430.1 1011.2 C432.1 1011.2 433.2 983.0 435.3 983.0 C437.4 983.0 438.5 1031.2 440.7 1031.2 C443.0 1031.2 444.1 1007.5 446.4 1007.5 C448.5 1007.5 449.5 1023.8 451.6 1023.8 C453.6 1023.8 454.7 1021.7 456.8 1017.1 C459.1 1011.9 460.3 999.3 462.7 999.3 C464.8 999.3 465.8 1008.1 467.9 1014.2 C470.1 1020.6 471.2 1030.5 473.4 1030.5 C475.6 1030.5 476.7 1026.6 479.0 1025.3 C481.2 1024.0 482.3 1023.8 484.5 1023.8 C486.7 1023.8 487.9 1034.9 490.1 1034.9 C492.3 1034.9 493.4 1025.3 495.6 1025.3 C497.7 1025.3 498.8 1026.6 500.9 1027.5 C503.1 1028.4 504.2 1027.5 506.4 1029.7 C508.5 1032.0 509.5 1043.1 511.6 1043.1 C513.8 1043.1 514.9 1027.5 517.1 1027.5 C519.1 1027.5 520.2 1047.5 522.2 1047.5 C524.4 1047.5 525.5 1036.2 527.7 1029.0 C530.0 1021.6 531.1 1011.2 533.3 1011.2 C535.6 1011.2 536.7 1046.8 539.0 1046.8 C541.2 1046.8 542.3 1045.7 544.5 1043.1 C546.7 1040.4 547.8 1033.4 550.1 1033.4 C552.3 1033.4 553.4 1040.9 555.6 1040.9 C557.7 1040.9 558.7 1034.9 560.8 1034.9 C563.0 1034.9 564.1 1053.5 566.3 1053.5 C568.4 1053.5 569.5 1013.4 571.6 1013.4 C573.8 1013.4 574.9 1013.4 577.1 1016.4 C579.3 1019.4 580.4 1030.1 582.6 1036.4 C584.7 1042.6 585.8 1047.5 587.9 1047.5 C590.2 1047.5 591.4 1026.0 593.7 1026.0 C595.9 1026.0 597.1 1043.1 599.3 1043.1 C601.4 1043.1 602.4 1026.3 604.5 1015.7 C606.7 1004.4 607.8 988.2 610.0 988.2 C612.3 988.2 613.4 1048.3 615.6 1048.3 C617.8 1048.3 618.9 1043.3 621.1 1038.6 C623.1 1034.4 624.1 1030.8 626.0 1026.0 C628.2 1020.7 629.3 1017.0 631.5 1013.4 C633.8 1009.8 634.9 1007.9 637.1 1007.9 C639.3 1007.9 640.4 1014.8 642.6 1018.6 C644.9 1022.5 646.0 1027.2 648.3 1027.2 C650.3 1027.2 651.4 1019.4 653.4 1019.4 C655.6 1019.4 656.7 1031.2 658.9 1031.2 C661.2 1031.2 662.3 1008.2 664.6 1006.8 C666.6 1005.3 667.7 1005.3 669.8 1005.3 C672.0 1005.3 675.4 1017.1 675.4 1017.1 L675.4 1136.0 L364.1 1136.0 Z" fill="#f5df90"/><path d="M364.1 1122.4 C364.1 1122.4 367.2 1129.1 369.3 1129.8 C371.6 1130.6 372.8 1130.6 375.2 1130.6 C377.4 1130.6 378.5 1130.3 380.7 1130.3 C382.9 1130.3 384.1 1132.0 386.3 1132.0 C388.5 1132.0 389.6 1126.1 391.8 1126.1 C393.9 1126.1 395.0 1129.8 397.1 1129.8 C399.3 1129.8 400.4 1126.8 402.6 1125.4 C404.7 1124.0 405.7 1122.9 407.8 1122.9 C410.1 1122.9 411.2 1129.8 413.5 1129.8 C415.7 1129.8 416.8 1128.7 418.9 1125.4 C421.2 1122.0 422.3 1113.1 424.6 1113.1 C426.8 1113.1 427.9 1122.1 430.1 1122.1 C432.1 1122.1 433.2 1121.7 435.3 1121.7 C437.4 1121.7 438.5 1127.6 440.7 1127.6 C443.0 1127.6 444.1 1123.9 446.4 1122.1 C448.5 1120.5 449.5 1119.1 451.6 1119.1 C453.8 1119.1 454.9 1123.9 457.1 1123.9 C459.3 1123.9 460.4 1114.0 462.7 1114.0 C464.8 1114.0 465.8 1120.8 467.9 1123.1 C470.1 1125.6 471.2 1126.1 473.4 1126.1 C475.6 1126.1 476.7 1123.6 479.0 1123.6 C481.2 1123.6 482.3 1126.9 484.5 1126.9 C486.7 1126.9 487.9 1122.4 490.1 1122.4 C492.3 1122.4 493.4 1129.8 495.6 1129.8 C497.7 1129.8 498.8 1129.8 500.9 1129.1 C503.1 1128.3 504.2 1123.9 506.4 1123.9 C508.5 1123.9 509.5 1130.6 511.6 1130.6 C513.8 1130.6 514.9 1129.1 517.1 1129.1 C519.1 1129.1 520.2 1129.8 522.2 1129.8 C524.4 1129.8 525.5 1127.6 527.7 1126.9 C530.0 1126.0 531.1 1125.8 533.3 1125.8 C535.6 1125.8 536.7 1130.6 539.0 1131.3 C541.2 1132.0 542.3 1132.0 544.5 1132.0 C546.7 1132.0 547.8 1131.6 550.1 1130.6 C552.3 1129.6 553.4 1127.1 555.6 1127.1 C557.7 1127.1 558.7 1127.6 560.8 1128.3 C563.0 1129.1 564.1 1131.0 566.3 1131.0 C568.4 1131.0 569.5 1131.0 571.6 1129.8 C573.8 1128.6 574.9 1118.0 577.1 1118.0 C579.3 1118.0 580.4 1123.3 582.6 1125.4 C584.7 1127.4 585.8 1128.3 587.9 1128.3 C590.2 1128.3 591.4 1115.0 593.7 1115.0 C595.9 1115.0 597.1 1123.1 599.3 1123.1 C601.4 1123.1 602.4 1121.3 604.5 1120.2 C606.7 1119.0 607.8 1117.2 610.0 1117.2 C612.3 1117.2 613.4 1133.5 615.6 1133.5 C617.8 1133.5 618.9 1130.8 621.1 1128.3 C623.1 1126.1 624.1 1121.7 626.0 1121.7 C628.2 1121.7 629.3 1121.7 631.5 1121.7 C633.8 1121.7 634.9 1119.7 637.1 1119.7 C639.3 1119.7 640.4 1129.8 642.6 1129.8 C644.9 1129.8 646.0 1129.3 648.3 1128.3 C650.3 1127.5 651.4 1125.4 653.4 1125.4 C655.6 1125.4 656.7 1130.6 658.9 1130.6 C661.2 1130.6 662.3 1123.1 664.6 1123.1 C666.6 1123.1 667.7 1125.2 669.8 1125.7 C672.0 1126.1 675.4 1126.1 675.4 1126.1 L675.4 1136.0 L364.1 1136.0 Z" fill="#c6d96f"/><path d="M364.1 1123.9 C364.1 1123.9 367.2 1132.8 369.3 1133.5 C371.6 1134.3 372.8 1134.1 375.2 1134.3 C377.4 1134.5 378.5 1134.4 380.7 1134.6 C382.9 1134.7 384.1 1135.0 386.3 1135.0 C388.5 1135.0 389.6 1129.1 391.8 1129.1 C393.9 1129.1 395.0 1133.5 397.1 1133.5 C399.3 1133.5 400.4 1132.8 402.6 1132.0 C404.7 1131.3 405.7 1129.8 407.8 1129.8 C410.1 1129.8 411.2 1132.8 413.5 1132.8 C415.7 1132.8 416.8 1132.8 418.9 1131.3 C421.2 1129.8 422.3 1119.1 424.6 1119.1 C426.8 1119.1 427.9 1126.1 430.1 1127.6 C432.1 1129.1 433.2 1128.5 435.3 1129.1 C437.4 1129.7 438.5 1130.6 440.7 1130.6 C443.0 1130.6 444.1 1129.1 446.4 1128.3 C448.5 1127.6 449.5 1126.9 451.6 1126.9 C453.8 1126.9 454.9 1126.9 457.1 1126.9 C459.3 1126.9 460.4 1117.2 462.7 1117.2 C464.8 1117.2 465.8 1125.6 467.9 1128.3 C470.1 1131.2 471.2 1131.3 473.4 1131.3 C475.6 1131.3 476.7 1129.8 479.0 1129.8 C481.2 1129.8 482.3 1130.6 484.5 1130.6 C486.7 1130.6 487.9 1129.1 490.1 1129.1 C492.3 1129.1 493.4 1133.5 495.6 1133.5 C497.7 1133.5 498.8 1133.5 500.9 1132.8 C503.1 1132.0 504.2 1128.3 506.4 1128.3 C508.5 1128.3 509.5 1133.5 511.6 1133.5 C513.8 1133.5 514.9 1132.8 517.1 1132.8 C519.1 1132.8 520.2 1134.3 522.2 1134.3 C524.4 1134.3 525.5 1133.4 527.7 1132.8 C530.0 1132.2 531.1 1131.3 533.3 1131.3 C535.6 1131.3 536.7 1135.0 539.0 1135.0 C541.2 1135.0 542.3 1135.0 544.5 1134.7 C546.7 1134.4 547.8 1133.9 550.1 1133.5 C552.3 1133.1 553.4 1133.3 555.6 1132.8 C557.7 1132.3 558.7 1131.0 560.8 1131.0 C563.0 1131.0 564.1 1134.3 566.3 1134.3 C568.4 1134.3 569.5 1134.3 571.6 1134.0 C573.8 1133.7 574.9 1128.8 577.1 1128.8 C579.3 1128.8 580.4 1129.3 582.6 1129.8 C584.7 1130.3 585.8 1131.3 587.9 1131.3 C590.2 1131.3 591.4 1118.3 593.7 1118.3 C595.9 1118.3 597.1 1125.4 599.3 1125.4 C601.4 1125.4 602.4 1123.6 604.5 1122.4 C606.7 1121.2 607.8 1119.4 610.0 1119.4 C612.3 1119.4 613.4 1135.0 615.6 1135.0 C617.8 1135.0 618.9 1132.6 621.1 1131.3 C623.1 1130.1 624.1 1129.3 626.0 1128.6 C628.2 1127.8 629.3 1128.1 631.5 1127.6 C633.8 1127.1 634.9 1126.1 637.1 1126.1 C639.3 1126.1 640.4 1133.5 642.6 1133.5 C644.9 1133.5 646.0 1131.0 648.3 1131.0 C650.3 1131.0 651.4 1132.1 653.4 1132.8 C655.6 1133.5 656.7 1134.3 658.9 1134.3 C661.2 1134.3 662.3 1131.3 664.6 1130.6 C666.6 1129.8 667.7 1129.8 669.8 1129.8 C672.0 1129.8 675.4 1133.5 675.4 1133.5 L675.4 1136.0 L364.1 1136.0 Z" fill="#f9c08e"/><path d="M364.1 1131.3 C364.1 1131.3 367.2 1134.9 369.3 1135.0 C371.6 1135.2 372.8 1135.1 375.2 1135.2 C377.4 1135.2 378.5 1135.3 380.7 1135.3 C382.9 1135.3 384.1 1135.3 386.3 1135.0 C388.5 1134.7 389.6 1129.5 391.8 1129.5 C393.9 1129.5 395.0 1134.0 397.1 1134.6 C399.3 1135.2 400.4 1135.2 402.6 1135.2 C404.7 1135.2 405.7 1134.3 407.8 1134.3 C410.1 1134.3 411.2 1135.2 413.5 1135.2 C415.7 1135.2 416.8 1135.0 418.9 1134.6 C421.2 1134.1 422.3 1133.1 424.6 1133.1 C426.8 1133.1 427.9 1134.3 430.1 1134.7 C432.1 1135.1 433.2 1135.2 435.3 1135.2 C437.4 1135.2 438.5 1135.2 440.7 1135.2 C443.0 1135.2 444.1 1134.9 446.4 1134.3 C448.5 1133.7 449.5 1132.7 451.6 1132.0 C453.8 1131.4 454.9 1131.0 457.1 1131.0 C459.3 1131.0 460.4 1131.1 462.7 1131.6 C464.8 1132.1 465.8 1132.9 467.9 1133.5 C470.1 1134.2 471.2 1134.9 473.4 1135.0 C475.6 1135.2 476.7 1135.2 479.0 1135.2 C481.2 1135.2 482.3 1135.2 484.5 1134.9 C486.7 1134.6 487.9 1133.1 490.1 1133.1 C492.3 1133.1 493.4 1135.0 495.6 1135.0 C497.7 1135.0 498.8 1134.6 500.9 1134.3 C503.1 1133.9 504.2 1133.1 506.4 1133.1 C508.5 1133.1 509.5 1135.2 511.6 1135.2 C513.8 1135.2 514.9 1135.0 517.1 1135.0 C519.1 1135.0 520.2 1135.2 522.2 1135.2 C524.4 1135.2 525.5 1134.3 527.7 1134.3 C530.0 1134.3 531.1 1134.7 533.3 1134.9 C535.6 1135.1 536.7 1135.3 539.0 1135.3 C541.2 1135.3 542.3 1135.3 544.5 1135.3 C546.7 1135.3 547.8 1135.2 550.1 1135.2 C552.3 1135.1 553.4 1135.1 555.6 1135.0 C557.7 1135.0 558.7 1134.9 560.8 1134.9 C563.0 1134.9 564.1 1135.3 566.3 1135.3 C568.4 1135.3 569.5 1135.2 571.6 1135.2 C573.8 1135.1 574.9 1134.9 577.1 1134.9 C579.3 1134.9 580.4 1134.9 582.6 1135.0 C584.7 1135.1 585.8 1135.2 587.9 1135.2 C590.2 1135.2 591.4 1134.9 593.7 1134.9 C595.9 1134.9 597.1 1135.0 599.3 1135.0 C601.4 1135.0 602.4 1134.9 604.5 1134.9 C606.7 1134.9 607.8 1134.9 610.0 1135.0 C612.3 1135.1 613.4 1135.3 615.6 1135.3 C617.8 1135.3 618.9 1135.0 621.1 1134.3 C623.1 1133.7 624.1 1132.0 626.0 1132.0 C628.2 1132.0 629.3 1132.5 631.5 1133.1 C633.8 1133.7 634.9 1134.6 637.1 1134.9 C639.3 1135.2 640.4 1135.2 642.6 1135.2 C644.9 1135.2 646.0 1134.9 648.3 1134.9 C650.3 1134.9 651.4 1135.2 653.4 1135.2 C655.6 1135.2 656.7 1135.2 658.9 1135.2 C661.2 1135.2 662.3 1134.6 664.6 1134.6 C666.6 1134.6 667.7 1134.7 669.8 1134.9 C672.0 1135.0 675.4 1135.2 675.4 1135.2 L675.4 1136.0 L364.1 1136.0 Z" fill="#fba69a"/><path d="M364 987.500H676M364 1061.500H676" stroke="#000" stroke-opacity=".035" stroke-width="1"/></svg>
<div class="b" style="left:297px;top:1203.5px;width:14px;height:14px;background:#86a3f6;border-radius:2.500px;"></div>
<svg style="left:299.8px;top:1206.8px" width="9" height="8" viewBox="0 0 9 8" fill="none" stroke="#fff" stroke-width="1.500" stroke-linecap="round" stroke-linejoin="round"><path d="M1.300 4.200l2.200 2.200 4.200-4.800"/></svg>
<div class="t" style="left:317.80px;top:1203.60px;font-size:11.5px;line-height:15px;color:#3a3c42;letter-spacing:0.670px;">0-50 мс</div>
<div class="t" style="left:614.47px;top:1203.60px;font-size:11.5px;line-height:15px;color:#3a3c42;letter-spacing:0.316px;">3676 (25.9%)</div>
<div class="b" style="left:297px;top:1225px;width:390px;height:1px;background:#e6ebf5;"></div>
<div class="b" style="left:297px;top:1232.63px;width:14px;height:14px;background:#89ce6c;border-radius:2.500px;"></div>
<svg style="left:299.8px;top:1235.9px" width="9" height="8" viewBox="0 0 9 8" fill="none" stroke="#fff" stroke-width="1.500" stroke-linecap="round" stroke-linejoin="round"><path d="M1.300 4.200l2.200 2.200 4.200-4.800"/></svg>
<div class="t" style="left:317.80px;top:1232.73px;font-size:11.5px;line-height:15px;color:#3a3c42;letter-spacing:0.361px;">51-100 мс</div>
<div class="t" style="left:631.38px;top:1232.73px;font-size:11.5px;line-height:15px;color:#3a3c42;letter-spacing:-0.071px;">210 (1.5%)</div>
<div class="b" style="left:297px;top:1254px;width:390px;height:1px;background:#e6ebf5;"></div>
<div class="b" style="left:297px;top:1261.76px;width:14px;height:14px;background:#cb9aee;border-radius:2.500px;"></div>
<svg style="left:299.8px;top:1265.1px" width="9" height="8" viewBox="0 0 9 8" fill="none" stroke="#fff" stroke-width="1.500" stroke-linecap="round" stroke-linejoin="round"><path d="M1.300 4.200l2.200 2.200 4.200-4.800"/></svg>
<div class="t" style="left:317.80px;top:1261.86px;font-size:11.5px;line-height:15px;color:#3a3c42;letter-spacing:0.373px;">101-200 мс</div>
<div class="t" style="left:632.28px;top:1261.86px;font-size:11.5px;line-height:15px;color:#3a3c42;letter-spacing:-0.075px;">119 (0.8%)</div>
<div class="b" style="left:297px;top:1283px;width:390px;height:1px;background:#e6ebf5;"></div>
<div class="b" style="left:297px;top:1290.89px;width:14px;height:14px;background:#f4d160;border-radius:2.500px;"></div>
<svg style="left:299.8px;top:1294.2px" width="9" height="8" viewBox="0 0 9 8" fill="none" stroke="#fff" stroke-width="1.500" stroke-linecap="round" stroke-linejoin="round"><path d="M1.300 4.200l2.200 2.200 4.200-4.800"/></svg>
<div class="t" style="left:317.80px;top:1290.99px;font-size:11.5px;line-height:15px;color:#3a3c42;letter-spacing:0.493px;">201-600 мс</div>
<div class="t" style="left:617.96px;top:1290.99px;font-size:11.5px;line-height:15px;color:#3a3c42;">9191 (64.8%)</div>
<div class="b" style="left:297px;top:1312px;width:390px;height:1px;background:#e6ebf5;"></div>
<div class="b" style="left:297px;top:1320.02px;width:14px;height:14px;background:#afc32f;border-radius:2.500px;"></div>
<svg style="left:299.8px;top:1323.3px" width="9" height="8" viewBox="0 0 9 8" fill="none" stroke="#fff" stroke-width="1.500" stroke-linecap="round" stroke-linejoin="round"><path d="M1.300 4.200l2.200 2.200 4.200-4.800"/></svg>
<div class="t" style="left:317.80px;top:1320.12px;font-size:11.5px;line-height:15px;color:#3a3c42;letter-spacing:0.383px;">601-1000 мс</div>
<div class="t" style="left:629.67px;top:1320.12px;font-size:11.5px;line-height:15px;color:#3a3c42;letter-spacing:0.119px;">440 (3.1%)</div>
<div class="b" style="left:297px;top:1341px;width:390px;height:1px;background:#e6ebf5;"></div>
<div class="b" style="left:297px;top:1349.15px;width:14px;height:14px;background:#f8a766;border-radius:2.500px;"></div>
<svg style="left:299.8px;top:1352.5px" width="9" height="8" viewBox="0 0 9 8" fill="none" stroke="#fff" stroke-width="1.500" stroke-linecap="round" stroke-linejoin="round"><path d="M1.300 4.200l2.200 2.200 4.200-4.800"/></svg>
<div class="t" style="left:317.80px;top:1349.25px;font-size:11.5px;line-height:15px;color:#3a3c42;letter-spacing:0.391px;">1001-4000 мс</div>
<div class="t" style="left:631.38px;top:1349.25px;font-size:11.5px;line-height:15px;color:#3a3c42;letter-spacing:-0.071px;">441 (3.1%)</div>
<div class="b" style="left:297px;top:1370px;width:390px;height:1px;background:#e6ebf5;"></div>
<div class="b" style="left:297px;top:1378.28px;width:14px;height:14px;background:#f6846f;border-radius:2.500px;"></div>
<svg style="left:299.8px;top:1381.6px" width="9" height="8" viewBox="0 0 9 8" fill="none" stroke="#fff" stroke-width="1.500" stroke-linecap="round" stroke-linejoin="round"><path d="M1.300 4.200l2.200 2.200 4.200-4.800"/></svg>
<div class="t" style="left:317.80px;top:1378.38px;font-size:11.5px;line-height:15px;color:#3a3c42;letter-spacing:0.379px;">&gt; 4 с</div>
<div class="t" style="left:634.70px;top:1378.38px;font-size:11.5px;line-height:15px;color:#3a3c42;letter-spacing:0.305px;">95 (0.7%)</div>
<div class="b" style="left:751.5px;top:862.6px;width:109px;height:28.5px;background:#3b8fe8;border-radius:3px 0 0 3px;"></div>
<div class="t" style="left:762.40px;top:869.55px;font-size:11.5px;line-height:15px;color:#fff;letter-spacing:0.293px;">Тепловая карта</div>
<div class="b" style="left:860.5px;top:862.6px;width:136.5px;height:28.5px;background:#fff;border:1px solid #e3e7ef;border-left:none;border-radius:0 3px 3px 0;"></div>
<div class="t" style="left:871.46px;top:869.55px;font-size:11.5px;line-height:15px;color:#3a3c42;letter-spacing:0.420px;">Топ городов и стран</div>
<svg style="left:751px;top:913.4px;overflow:hidden" width="390.5" height="485.6" viewBox="751 913.4 390.5 485.6"><defs>
<radialGradient id="gc"><stop offset="0" stop-color="#8ef4ee" stop-opacity=".62"/><stop offset=".25" stop-color="#9deaf4" stop-opacity=".52"/><stop offset=".55" stop-color="#b6cbf5" stop-opacity=".34"/><stop offset=".82" stop-color="#c9c6f2" stop-opacity=".13"/><stop offset="1" stop-color="#d0ccf2" stop-opacity="0"/></radialGradient>
<radialGradient id="gf"><stop offset="0" stop-color="#a4e6f6" stop-opacity=".5"/><stop offset=".45" stop-color="#bcc8f4" stop-opacity=".3"/><stop offset=".8" stop-color="#ccc8f2" stop-opacity=".1"/><stop offset="1" stop-color="#d0ccf2" stop-opacity="0"/></radialGradient>
<radialGradient id="gp"><stop offset="0" stop-color="#8ee85e" stop-opacity=".88"/><stop offset=".16" stop-color="#88ee80" stop-opacity=".8"/><stop offset=".3" stop-color="#88f2c4" stop-opacity=".68"/><stop offset=".45" stop-color="#98eaf0" stop-opacity=".55"/><stop offset=".62" stop-color="#a8d2f6" stop-opacity=".38"/><stop offset=".8" stop-color="#c2c4f3" stop-opacity=".18"/><stop offset="1" stop-color="#d0ccf2" stop-opacity="0"/></radialGradient>
<radialGradient id="gm"><stop offset="0" stop-color="#f0902c"/><stop offset=".07" stop-color="#f5a82c"/><stop offset=".17" stop-color="#f3dc36"/><stop offset=".28" stop-color="#d6f03a"/><stop offset=".42" stop-color="#86ec4e" stop-opacity=".96"/><stop offset=".56" stop-color="#7cf0a0" stop-opacity=".82"/><stop offset=".66" stop-color="#8fe8ec" stop-opacity=".62"/><stop offset=".8" stop-color="#b8c6f4" stop-opacity=".3"/><stop offset="1" stop-color="#d0ccf2" stop-opacity="0"/></radialGradient>
</defs><rect x="751" y="913.4" width="390.5" height="485.6" fill="#faf7f3"/><path d="M794.4 948.2 C794.4 948.2 796.2 944.1 797.4 942.6 C799.2 940.3 800.1 940.5 801.8 938.8 C803.6 937.1 804.5 936.5 806.3 934.0 C807.6 932.2 808.3 929.8 809.6 928.1 C810.9 926.4 811.6 925.4 812.9 925.4 C815.5 925.4 816.8 928.0 819.5 929.7 C822.6 931.7 824.2 931.8 827.4 934.7 C831.3 938.2 833.3 942.0 837.3 945.9 C841.3 949.9 843.4 948.6 847.5 954.4 C849.4 957.3 850.4 962.9 852.4 967.6 C853.7 970.8 854.4 974.2 855.7 974.2 C853.7 974.2 852.7 976.0 850.8 979.5 C849.7 981.3 849.2 986.1 848.1 987.4 C845.2 990.9 843.8 991.7 840.9 991.7 C836.9 991.7 835.0 990.7 831.0 990.7 C829.3 990.7 828.4 1000.6 826.7 1000.6 C824.5 1000.6 823.4 1000.6 821.1 997.3 C819.8 994.0 819.1 990.0 817.8 987.4 C815.2 982.2 813.9 982.2 811.2 977.8 C809.9 975.6 809.3 974.7 807.9 970.9 C807.1 968.6 806.7 964.3 806.0 962.7 C803.6 957.7 802.4 957.4 800.0 954.4 C797.8 951.6 794.4 948.2 794.4 948.2Z" fill="#d2e4e8"/><path d="M886.7 914.3 C886.7 914.3 892.7 912.3 896.7 912.3 C900.7 912.3 902.7 912.3 906.7 914.3 C911.3 916.3 913.7 920.2 918.3 925.7 C921.8 929.8 923.5 925.7 927.0 938.3 C925.4 951.0 924.6 952.1 923.0 955.0 C919.5 961.4 917.8 961.7 914.3 961.7 C912.2 961.7 911.1 956.3 909.0 952.3 C906.1 946.9 904.6 942.4 901.7 938.3 C897.9 933.1 896.1 935.0 892.3 929.0 C890.1 925.4 886.7 914.3 886.7 914.3Z" fill="#d2e4e8"/><path d="M944.3 1045.0 C944.3 1045.0 948.3 1037.0 951.0 1035.7 C953.9 1034.3 955.4 1034.3 958.3 1034.3 C959.9 1034.3 960.7 1040.1 962.3 1042.3 C965.0 1046.0 966.3 1046.5 969.0 1049.0 C971.9 1051.8 973.4 1052.0 976.3 1055.7 C977.4 1057.0 977.9 1061.7 979.0 1061.7 C976.6 1061.7 975.4 1067.2 973.0 1069.0 C969.8 1071.4 968.2 1072.3 965.0 1072.3 C963.4 1072.3 962.6 1066.6 961.0 1064.3 C958.9 1061.3 957.8 1061.0 955.7 1059.0 C953.3 1056.7 952.1 1056.6 949.7 1053.7 C947.5 1051.0 944.3 1045.0 944.3 1045.0Z" fill="#d2e4e8"/><path d="M814.3 1067.0 C814.3 1067.0 819.1 1059.7 822.3 1059.7 C825.5 1059.7 827.1 1059.7 830.3 1063.0 C829.8 1066.3 829.5 1069.0 829.0 1069.7 C825.5 1070.3 823.8 1070.3 820.3 1070.3 C817.9 1070.3 814.3 1067.0 814.3 1067.0Z" fill="#d2e4e8"/><path d="M750.0 1064.3 C750.0 1064.3 753.8 1065.4 756.3 1068.3 C757.9 1070.2 758.7 1069.0 760.3 1076.3 C759.0 1083.7 758.3 1083.7 757.0 1083.7 C754.2 1083.7 752.8 1083.7 750.0 1082.3 C750.0 1081.0 750.0 1064.3 750.0 1064.3Z" fill="#d2e4e8"/><path d="M749.9 977.5 C749.9 977.5 757.9 977.9 763.1 980.0 C767.7 981.8 770.0 985.2 774.7 987.4 C779.3 989.5 781.6 989.7 786.2 990.7 C790.8 991.7 793.1 990.7 797.7 992.3 C799.2 994.0 799.9 997.3 801.3 997.3 C798.6 997.3 797.2 1000.9 794.4 1000.9 C789.2 1000.9 786.5 999.9 781.2 999.9 C776.6 999.9 774.3 999.9 769.7 1002.5 C767.2 1005.2 766.0 1008.5 763.5 1010.4 C760.2 1012.4 758.5 1012.4 755.2 1012.4 C753.1 1012.4 752.1 1012.4 749.9 1010.4 C749.9 1008.5 749.9 977.5 749.9 977.5Z" fill="#d2e4e8"/><path d="M749.9 924.8 C749.9 924.8 752.7 924.8 754.6 927.2 C755.0 929.7 755.1 936.3 755.5 936.3 C754.5 936.3 754.0 940.4 752.9 940.4 C751.7 940.4 751.1 940.4 749.9 939.6 C749.9 938.8 749.9 924.8 749.9 924.8Z" fill="#d2e4e8"/><path d="M749.9 949.5 C749.9 949.5 752.5 948.2 754.2 948.2 C755.1 948.2 755.6 954.4 756.5 954.4 C755.3 954.4 754.8 959.4 753.6 959.4 C752.1 959.4 751.4 959.4 749.9 958.5 C749.9 957.7 749.9 949.5 749.9 949.5Z" fill="#d2e4e8"/><path d="M782.9 914.9 C782.9 914.9 786.1 913.6 788.2 913.6 C788.8 913.6 789.2 919.5 789.8 919.5 C788.4 919.5 787.6 922.8 786.2 922.8 C785.0 922.8 784.4 922.8 783.2 920.2 C783.1 917.5 782.9 914.9 782.9 914.9Z" fill="#d2e4e8"/><path d="M794.4 919.8 C794.4 919.8 796.6 918.5 798.0 918.5 C798.6 918.5 798.8 924.4 799.4 924.4 C798.2 924.4 797.6 927.1 796.4 927.1 C795.6 927.1 794.4 919.8 794.4 919.8Z" fill="#d2e4e8"/><path d="M814.2 913.6 C814.2 913.6 816.2 913.6 817.5 914.2 C817.4 914.9 817.3 918.8 817.2 918.8 C816.2 918.8 815.8 918.8 814.9 918.2 C814.6 917.5 814.2 913.6 814.2 913.6Z" fill="#d2e4e8"/><path d="M857.0 913.6 C857.0 913.6 860.6 913.6 863.0 914.2 C863.4 914.9 863.6 918.8 863.9 918.8 C862.5 918.8 861.8 920.8 860.3 920.8 C859.3 920.8 858.7 920.2 857.7 917.9 C857.4 917.3 857.0 913.6 857.0 913.6Z" fill="#d2e4e8"/><path d="M973.7 967.0 C973.7 967.0 976.5 965.0 978.3 965.0 C979.1 965.0 979.5 970.2 980.3 973.7 C979.5 976.3 979.1 980.3 978.3 980.3 C977.3 980.3 976.7 979.4 975.7 976.3 C974.9 974.0 973.7 967.0 973.7 967.0Z" fill="#d2e4e8"/><path d="M970.3 938.3 C970.3 938.3 973.1 935.7 975.0 935.7 C975.5 935.7 975.8 941.7 976.3 941.7 C974.7 941.7 973.9 948.3 972.3 948.3 C971.3 948.3 970.7 948.3 969.7 945.0 C969.9 941.7 970.3 938.3 970.3 938.3Z" fill="#d2e4e8"/><path d="M975.0 1001.7 C975.0 1001.7 979.4 1003.0 982.3 1005.0 C986.1 1007.5 987.9 1013.0 991.7 1013.0 C991.1 1013.0 990.9 1017.0 990.3 1017.0 C987.1 1017.0 985.5 1013.6 982.3 1011.0 C979.7 1008.8 978.3 1008.4 975.7 1005.0 C975.4 1004.7 975.0 1001.7 975.0 1001.7Z" fill="#d2e4e8"/><ellipse cx="949.0" cy="990.0" rx="7.500" ry="5.500" fill="#d2e4e8"/><path d="M1057.7 1090.3 C1057.7 1090.3 1059.7 1093.7 1061.0 1103.7 C1060.5 1113.7 1060.2 1113.7 1059.7 1113.7 C1062.1 1113.7 1063.3 1119.8 1065.7 1123.7 C1069.4 1129.7 1071.3 1133.2 1075.0 1138.3 C1077.7 1142.0 1081.7 1145.7 1081.7 1145.7" fill="none" stroke="#d2e4e8" stroke-width="1.6" stroke-linecap="round"/><path d="M1106.7 1145.7 C1106.7 1145.7 1113.7 1142.4 1118.3 1141.0 C1123.7 1139.4 1126.3 1139.3 1131.7 1138.3 C1136.3 1137.5 1143.3 1136.3 1143.3 1136.3" fill="none" stroke="#d2e4e8" stroke-width="1.6" stroke-linecap="round"/><path d="M978.3 1061.7 C978.3 1061.7 986.3 1073.9 991.7 1078.3 C998.3 1083.9 1001.7 1084.2 1008.3 1086.7 C1016.3 1089.6 1020.3 1088.7 1028.3 1091.7 C1040.1 1096.0 1057.7 1105.0 1057.7 1105.0" fill="none" stroke="#d2e4e8" stroke-width="0.8" stroke-linecap="round"/><path d="M958.3 998.3 C958.3 998.3 970.3 1001.0 978.3 1005.0 C989.0 1010.3 994.3 1021.7 1005.0 1021.7 C1015.7 1021.7 1021.0 1019.1 1031.7 1015.0 C1045.0 1009.8 1051.7 1005.7 1065.0 998.3 C1078.3 991.0 1085.0 985.4 1098.3 978.3 C1110.3 972.0 1128.3 965.0 1128.3 965.0" fill="none" stroke="#d2e4e8" stroke-width="0.8" stroke-linecap="round"/><path d="M931.7 1118.3 C931.7 1118.3 927.7 1122.3 925.0 1125.0 C927.7 1129.0 929.0 1132.0 931.7 1135.0 C938.3 1142.6 948.3 1151.7 948.3 1151.7" fill="none" stroke="#d2e4e8" stroke-width="0.8" stroke-linecap="round"/><path d="M1128.4 1292.7 C1128.4 1292.7 1122.9 1294.6 1119.2 1302.0 C1117.7 1305.0 1117.0 1318.7 1115.5 1318.7 C1118.4 1318.7 1119.9 1322.4 1122.9 1333.5 C1120.7 1344.6 1117.3 1344.6 1117.3 1344.6" fill="none" stroke="#d2e4e8" stroke-width="1.6" stroke-linecap="round"/><path d="M806.0 1313.1 C806.0 1313.1 807.1 1323.3 807.8 1326.1 C810.1 1334.4 811.2 1337.4 813.4 1340.9 C818.6 1349.2 821.2 1352.3 826.4 1355.7 C836.7 1362.7 841.9 1360.2 852.3 1366.9 C862.7 1373.5 878.3 1389.1 878.3 1389.1" fill="none" stroke="#d2e4e8" stroke-width="1.6" stroke-linecap="round"/><path d="M967.2 1307.6 C967.2 1307.6 970.5 1307.6 972.8 1322.4 C972.0 1337.2 970.9 1337.2 970.9 1337.2" fill="none" stroke="#d2e4e8" stroke-width="0.8" stroke-linecap="round"/><path d="M855.0 963.3 L868.3 955.0 L885.0 946.7 L901.7 948.3 L905.7 961.7 L901.7 981.7 L908.3 1005.0 L905.0 1018.3 L891.7 1031.7 L878.3 1028.3 L861.7 1021.7 L845.0 1025.0 L832.3 1020.0 L822.3 1035.0 L811.7 1045.0 L795.0 1055.0 L788.3 1051.7" fill="none" stroke="#e5e0db" stroke-width=".9" stroke-linejoin="round" stroke-dasharray="5 .6 3 .5 6 .4"/><path d="M905.7 961.7 L918.3 948.3 L931.7 935.0 L951.7 931.7 L958.3 915.0" fill="none" stroke="#e5e0db" stroke-width=".9" stroke-linejoin="round" stroke-dasharray="5 .6 3 .5 6 .4"/><path d="M958.3 948.3 L978.3 968.3 L998.3 966.7 L1021.7 970.0 L1038.3 961.7 L1065.0 963.3 L1078.3 955.0 L1101.7 958.3 L1121.7 948.3 L1143.3 951.7" fill="none" stroke="#e5e0db" stroke-width=".9" stroke-linejoin="round" stroke-dasharray="5 .6 3 .5 6 .4"/><path d="M908.3 1005.0 L925.0 1015.0 L941.7 1015.0 L945.0 1045.0" fill="none" stroke="#e5e0db" stroke-width=".9" stroke-linejoin="round" stroke-dasharray="5 .6 3 .5 6 .4"/><path d="M978.3 1061.7 L998.3 1038.3 L1018.3 1045.0 L1035.0 1021.7 L1065.0 1028.3 L1095.0 1031.7 L1111.7 1025.0 L1143.3 1028.3" fill="none" stroke="#e5e0db" stroke-width=".9" stroke-linejoin="round" stroke-dasharray="5 .6 3 .5 6 .4"/><path d="M1018.3 1045.0 L1021.7 1065.0 L1008.3 1085.0 L1011.7 1098.3 L1025.0 1095.0 L1051.7 1098.3 L1061.7 1105.0" fill="none" stroke="#e5e0db" stroke-width=".9" stroke-linejoin="round" stroke-dasharray="5 .6 3 .5 6 .4"/><path d="M788.3 1051.7 L795.0 1078.3 L808.3 1105.0 L811.7 1118.3 L831.7 1121.7 L855.0 1105.0 L871.7 1071.7 L885.0 1065.0 L905.0 1058.3 L925.0 1048.3 L945.0 1045.0" fill="none" stroke="#e5e0db" stroke-width=".9" stroke-linejoin="round" stroke-dasharray="5 .6 3 .5 6 .4"/><path d="M871.7 1071.7 L878.3 1091.7 L891.7 1105.0 L905.0 1131.7 L931.7 1128.3 L945.0 1118.3" fill="none" stroke="#e5e0db" stroke-width=".9" stroke-linejoin="round" stroke-dasharray="5 .6 3 .5 6 .4"/><path d="M945.0 1071.7 L951.7 1091.7 L945.0 1118.3 L961.7 1125.0 L978.3 1118.3 L991.7 1108.3 L1008.3 1085.0" fill="none" stroke="#e5e0db" stroke-width=".9" stroke-linejoin="round" stroke-dasharray="5 .6 3 .5 6 .4"/><path d="M1095.0 1031.7 L1091.7 1055.0 L1105.0 1078.3 L1098.3 1098.3 L1111.7 1118.3 L1128.3 1111.7 L1143.3 1118.3" fill="none" stroke="#e5e0db" stroke-width=".9" stroke-linejoin="round" stroke-dasharray="5 .6 3 .5 6 .4"/><path d="M1101.7 958.3 L1108.3 925.0 L1098.3 911.7" fill="none" stroke="#e5e0db" stroke-width=".9" stroke-linejoin="round" stroke-dasharray="5 .6 3 .5 6 .4"/><path d="M811.7 1118.3 L818.3 1138.3 L838.3 1158.3" fill="none" stroke="#e5e0db" stroke-width=".9" stroke-linejoin="round" stroke-dasharray="5 .6 3 .5 6 .4"/><path d="M907.9 1133.4 L904.2 1170.4 L922.7 1177.8 L893.1 1192.7 L870.8 1203.8 L859.7 1222.3 L885.7 1233.4 L900.5 1244.6 L893.1 1263.1 L904.2 1277.9" fill="none" stroke="#e5e0db" stroke-width=".9" stroke-linejoin="round" stroke-dasharray="5 .6 3 .5 6 .4"/><path d="M922.7 1177.8 L948.7 1192.7 L970.9 1211.2 L974.6 1237.1 L996.9 1244.6 L1026.5 1226.0 L1045.0 1233.4 L1056.2 1211.2 L1048.8 1185.2 L1037.6 1170.4 L1011.7 1174.1 L989.5 1177.8 L974.6 1189.0 L970.9 1211.2" fill="none" stroke="#e5e0db" stroke-width=".9" stroke-linejoin="round" stroke-dasharray="5 .6 3 .5 6 .4"/><path d="M974.6 1237.1 L952.4 1248.3 L956.1 1277.9 L937.6 1285.3 L952.4 1300.1 L967.2 1307.6" fill="none" stroke="#e5e0db" stroke-width=".9" stroke-linejoin="round" stroke-dasharray="5 .6 3 .5 6 .4"/><path d="M1056.2 1211.2 L1082.1 1222.3 L1100.6 1203.8 L1122.9 1196.4 L1143.3 1192.7" fill="none" stroke="#e5e0db" stroke-width=".9" stroke-linejoin="round" stroke-dasharray="5 .6 3 .5 6 .4"/><path d="M1045.0 1233.4 L1059.9 1263.1 L1052.5 1285.3 L1037.6 1292.7 L1011.7 1285.3 L996.9 1263.1 L996.9 1244.6" fill="none" stroke="#e5e0db" stroke-width=".9" stroke-linejoin="round" stroke-dasharray="5 .6 3 .5 6 .4"/><path d="M1052.5 1285.3 L1078.4 1307.6 L1100.6 1322.4 L1115.5 1340.9 L1143.3 1352.0" fill="none" stroke="#e5e0db" stroke-width=".9" stroke-linejoin="round" stroke-dasharray="5 .6 3 .5 6 .4"/><path d="M967.2 1307.6 L989.5 1322.4 L1011.7 1337.2 L1026.5 1322.4 L1048.8 1315.0 L1078.4 1307.6" fill="none" stroke="#e5e0db" stroke-width=".9" stroke-linejoin="round" stroke-dasharray="5 .6 3 .5 6 .4"/><path d="M807.8 1307.6 L815.2 1329.8 L837.5 1340.9 L859.7 1337.2 L893.1 1344.6 L904.2 1366.9 L930.1 1374.3 L937.6 1400.2" fill="none" stroke="#e5e0db" stroke-width=".9" stroke-linejoin="round" stroke-dasharray="5 .6 3 .5 6 .4"/><path d="M859.7 1277.9 L856.0 1307.6 L863.4 1329.8 L859.7 1337.2" fill="none" stroke="#e5e0db" stroke-width=".9" stroke-linejoin="round" stroke-dasharray="5 .6 3 .5 6 .4"/><path d="M982.0 1111.1 L989.5 1133.4 L1011.7 1144.5 L1037.6 1170.4" fill="none" stroke="#e5e0db" stroke-width=".9" stroke-linejoin="round" stroke-dasharray="5 .6 3 .5 6 .4"/><path d="M751.1 1255.7 L767.1 1248.3 L789.3 1259.4 L804.1 1248.3 L826.4 1255.7" fill="none" stroke="#e5e0db" stroke-width=".9" stroke-linejoin="round" stroke-dasharray="5 .6 3 .5 6 .4"/><path d="M751.1 1340.9 L774.5 1359.5 L767.1 1381.7 L781.9 1400.2" fill="none" stroke="#e5e0db" stroke-width=".9" stroke-linejoin="round" stroke-dasharray="5 .6 3 .5 6 .4"/><path d="M1011.7 1337.2 L1019.1 1359.5 L1041.3 1374.3 L1063.6 1366.9 L1085.8 1381.7 L1100.6 1400.2" fill="none" stroke="#e5e0db" stroke-width=".9" stroke-linejoin="round" stroke-dasharray="5 .6 3 .5 6 .4"/><path d="M1100.6 1322.4 L1093.2 1344.6 L1100.6 1366.9 L1085.8 1381.7" fill="none" stroke="#e5e0db" stroke-width=".9" stroke-linejoin="round" stroke-dasharray="5 .6 3 .5 6 .4"/><path d="M768.3 915.0 L758.3 935.0 L750.0 948.3" fill="none" stroke="#f0dde0" stroke-width="1" stroke-linejoin="round"/><path d="M750.0 1038.3 L758.3 1055.0 L755.0 1078.3 L753.3 1105.0 L758.3 1125.0 L768.3 1138.3 L778.3 1145.0 L788.3 1153.3 L798.3 1161.7" fill="none" stroke="#f0dde0" stroke-width="1" stroke-linejoin="round"/><path d="M811.5 1118.5 L819.0 1137.1 L815.2 1170.4 L833.8 1222.3 L852.3 1237.1 L826.4 1255.7 L830.1 1274.2 L859.7 1277.9 L878.3 1274.2 L882.0 1300.1 L904.2 1318.7 L922.7 1329.8 L952.4 1340.9 L982.0 1355.7 L1000.6 1368.7" fill="none" stroke="#f0dde0" stroke-width="1" stroke-linejoin="round"/><path d="M751.1 1148.2 L767.1 1144.5 L789.3 1159.3 L815.2 1170.4" fill="none" stroke="#f0dde0" stroke-width="1" stroke-linejoin="round"/><path d="M751.1 1300.1 L774.5 1303.9 L807.8 1307.6" fill="none" stroke="#f0dde0" stroke-width="1" stroke-linejoin="round"/><path d="M803.3 1001.7 C803.3 1001.7 816.3 1029.0 825.0 1038.3 C842.3 1057.0 851.0 1055.2 868.3 1071.7 C879.0 1081.8 884.3 1095.7 895.0 1105.0 C905.7 1114.3 911.0 1109.2 921.7 1118.3 C929.7 1125.2 933.7 1134.0 941.7 1145.0 C944.3 1148.7 948.3 1155.0 948.3 1155.0" fill="none" stroke="#f5e3c3" stroke-width="1"/><path d="M946.8 1185.2 C946.8 1185.2 947.9 1200.1 948.7 1200.1 C947.2 1200.1 945.0 1209.3 945.0 1209.3" fill="none" stroke="#f5e3c3" stroke-width="1"/><path d="M752.2 1224.2 C752.2 1224.2 763.4 1214.9 770.8 1211.2 C784.1 1204.5 804.1 1198.2 804.1 1198.2" fill="none" stroke="#f5e3c3" stroke-width="1"/><path d="M904.2 1385.4 C904.2 1385.4 906.4 1371.3 907.9 1366.9 C910.9 1358.0 915.3 1352.0 915.3 1352.0" fill="none" stroke="#f5e3c3" stroke-width="1"/><circle cx="760.0" cy="1076.7" r="40" fill="url(#gc)"/><circle cx="920.0" cy="1108.0" r="38" fill="url(#gf)"/><circle cx="1083.5" cy="1135.5" r="42" fill="url(#gc)"/><circle cx="1140.0" cy="1138.0" r="34" fill="url(#gc)"/><circle cx="752.0" cy="1222.0" r="32" fill="url(#gc)"/><circle cx="1024.7" cy="1263.0" r="38" fill="url(#gc)"/><circle cx="917.2" cy="1292.7" r="38" fill="url(#gc)"/><circle cx="972.8" cy="1326.0" r="38" fill="url(#gc)"/><circle cx="1117.3" cy="1296.4" r="38" fill="url(#gc)"/><circle cx="806.0" cy="1335.4" r="34" fill="url(#gc)"/><circle cx="839.3" cy="1398.0" r="32" fill="url(#gc)"/><circle cx="804.0" cy="1001.0" r="40" fill="url(#gp)"/><circle cx="948.7" cy="1156.0" r="40" fill="url(#gm)"/></svg>
<div class="t" style="left:752.00px;top:994.80px;font-size:9px;line-height:12px;color:#9da2b6;font-weight:700;">Petersburg</div>
<div class="b" style="left:801.2px;top:999.4px;width:2.4px;height:2.4px;background:#8c92a8;border-radius:50%;"></div>
<div class="t" style="left:899.40px;top:1154.00px;font-size:8.5px;line-height:11px;color:#9da2b6;font-weight:700;letter-spacing:0.978px;">MOSCOW</div>
<div class="t" style="left:999.50px;top:1132.80px;font-size:8.5px;line-height:11px;color:#9da2b6;font-weight:700;letter-spacing:0.309px;">Nizhny Novgorod</div>
<div class="b" style="left:1077px;top:1137px;width:2.4px;height:2.4px;background:#8c92a8;border-radius:50%;"></div>
<div class="t" style="left:751.50px;top:1234.00px;font-size:9.5px;line-height:12px;color:#9aa0b8;font-weight:700;letter-spacing:-0.355px;">ARUS</div>
<div class="t" style="left:781.00px;top:1330.50px;font-size:8.5px;line-height:11px;color:#9da2b6;font-weight:700;letter-spacing:0.790px;">KYIV</div>
<div class="b" style="left:806px;top:1334.6px;width:2.4px;height:2.4px;background:#8c92a8;border-radius:50%;"></div>
<div class="t" style="left:796.00px;top:1360.20px;font-size:9.5px;line-height:12px;color:#9aa0b8;font-weight:700;letter-spacing:1.317px;">UKRAINE</div>
<div class="b" style="left:758.5px;top:920.8px;width:26.5px;height:53.4px;background:#fff;border-radius:3px;box-shadow:0 0 2px rgba(0,0,0,.18);"></div>
<div class="b" style="left:758.5px;top:947px;width:26.5px;height:1px;background:#dfe3e8;"></div>
<div class="b" style="left:768.2px;top:933.6px;width:6px;height:1.8px;background:#333;"></div>
<div class="b" style="left:770.3px;top:931.5px;width:1.8px;height:6px;background:#333;"></div>
<div class="b" style="left:768.7px;top:960.6px;width:5px;height:1.8px;background:#333;"></div>
<div class="b" style="left:1109.3px;top:920.8px;width:26.5px;height:26.5px;background:#fff;border-radius:3px;box-shadow:0 0 2px rgba(0,0,0,.18);"></div>
<svg style="left:1119.300px;top:931px" width="6.500" height="6.500" viewBox="0 0 8 8" fill="#3a3a3a"><path d="M4 .3h3.700v3.700zM4 7.700h-3.700v-3.700z"/><path d="M6.600 1.400L1.400 6.600" stroke="#3a3a3a" stroke-width="1.600"/></svg>
<div class="b" style="left:966px;top:1380.5px;width:175.5px;height:18.5px;background:rgba(255,255,255,.8);"></div>
<div class="t" style="left:971.50px;top:1383.30px;font-size:10.5px;line-height:14px;color:#333;">©</div>
<div class="t" style="left:983.90px;top:1383.30px;font-size:11px;line-height:14px;color:#6f747c;letter-spacing:0.565px;">OpenStreetMap</div>
<div class="t" style="left:1072.80px;top:1383.30px;font-size:11px;line-height:14px;color:#333;letter-spacing:0.252px;">contributors.</div>
<div class="t" style="left:297.00px;top:1465.60px;font-size:14px;line-height:18px;color:#2e3442;letter-spacing:0.572px;-webkit-text-stroke:.18px #2e3442;">Топ локаций</div>
<div class="b" style="left:299.7px;top:1512.0px;width:8px;height:8px;background:#8aa6f7;border-radius:50%;"></div>
<div class="t" style="left:316.80px;top:1508.70px;font-size:11.5px;line-height:15px;color:#3d8be6;letter-spacing:0.437px;">/my/4g5jla3lh92y3eg57/addonmodule...</div>
<div class="t" style="left:582.37px;top:1508.70px;font-size:11.5px;line-height:15px;color:#3a3c42;letter-spacing:0.261px;">5.84 k</div>
<div class="t" style="left:652.29px;top:1508.70px;font-size:11.5px;line-height:15px;color:#3a3c42;letter-spacing:-0.032px;">47.18 %</div>
<div class="b" style="left:299.7px;top:1547.27px;width:8px;height:8px;background:#95cf75;border-radius:50%;"></div>
<div class="t" style="left:316.80px;top:1543.97px;font-size:11.5px;line-height:15px;color:#3d8be6;letter-spacing:0.384px;">/my/microcall.php</div>
<div class="t" style="left:582.37px;top:1543.97px;font-size:11.5px;line-height:15px;color:#3a3c42;letter-spacing:0.261px;">3.02 k</div>
<div class="t" style="left:650.84px;top:1543.97px;font-size:11.5px;line-height:15px;color:#3a3c42;letter-spacing:0.211px;">24.39 %</div>
<div class="b" style="left:299.7px;top:1582.54px;width:8px;height:8px;background:#cda0f0;border-radius:50%;"></div>
<div class="t" style="left:316.80px;top:1579.24px;font-size:11.5px;line-height:15px;color:#3d8be6;">/</div>
<div class="t" style="left:582.37px;top:1579.24px;font-size:11.5px;line-height:15px;color:#3a3c42;letter-spacing:0.261px;">0.58 k</div>
<div class="t" style="left:657.45px;top:1579.24px;font-size:11.5px;line-height:15px;color:#3a3c42;letter-spacing:0.209px;">4.67 %</div>
<div class="b" style="left:299.7px;top:1617.81px;width:8px;height:8px;background:#f0d264;border-radius:50%;"></div>
<div class="t" style="left:316.80px;top:1614.51px;font-size:11.5px;line-height:15px;color:#3d8be6;letter-spacing:0.416px;">/my/index.php</div>
<div class="t" style="left:582.37px;top:1614.51px;font-size:11.5px;line-height:15px;color:#3a3c42;letter-spacing:0.261px;">0.23 k</div>
<div class="t" style="left:658.87px;top:1614.51px;font-size:11.5px;line-height:15px;color:#3a3c42;letter-spacing:-0.074px;">1.82 %</div>
<div class="b" style="left:299.7px;top:1653.08px;width:8px;height:8px;background:#b3c93a;border-radius:50%;"></div>
<div class="t" style="left:316.80px;top:1649.78px;font-size:11.5px;line-height:15px;color:#3d8be6;letter-spacing:0.493px;">/my/4g5jla3lh92y3eg57/supportticket...</div>
<div class="t" style="left:584.12px;top:1649.78px;font-size:11.5px;line-height:15px;color:#3a3c42;letter-spacing:-0.089px;">0.18 k</div>
<div class="t" style="left:658.87px;top:1649.78px;font-size:11.5px;line-height:15px;color:#3a3c42;letter-spacing:-0.074px;">1.42 %</div>
<div class="b" style="left:299.7px;top:1688.35px;width:8px;height:8px;background:#f8a968;border-radius:50%;"></div>
<div class="t" style="left:316.80px;top:1685.05px;font-size:11.5px;line-height:15px;color:#3d8be6;letter-spacing:0.322px;">/my/spa/scripts/spa_version.json</div>
<div class="t" style="left:584.12px;top:1685.05px;font-size:11.5px;line-height:15px;color:#3a3c42;letter-spacing:-0.089px;">0.15 k</div>
<div class="t" style="left:660.29px;top:1685.05px;font-size:11.5px;line-height:15px;color:#3a3c42;letter-spacing:-0.358px;">1.18 %</div>
<div class="b" style="left:299.7px;top:1723.62px;width:8px;height:8px;background:#f88a77;border-radius:50%;"></div>
<div class="t" style="left:316.80px;top:1720.32px;font-size:11.5px;line-height:15px;color:#3d8be6;letter-spacing:0.472px;">/my/4g5jla3lh92y3eg57/index.php</div>
<div class="t" style="left:584.12px;top:1720.32px;font-size:11.5px;line-height:15px;color:#3a3c42;letter-spacing:-0.089px;">0.13 k</div>
<div class="t" style="left:658.87px;top:1720.32px;font-size:11.5px;line-height:15px;color:#3a3c42;letter-spacing:-0.074px;">1.06 %</div>
<div class="b" style="left:299.7px;top:1758.89px;width:8px;height:8px;background:#6fc8f5;border-radius:50%;"></div>
<div class="t" style="left:316.80px;top:1755.59px;font-size:11.5px;line-height:15px;color:#3d8be6;letter-spacing:0.429px;">/my/includes/thumbnail.php</div>
<div class="t" style="left:584.12px;top:1755.59px;font-size:11.5px;line-height:15px;color:#3a3c42;letter-spacing:-0.089px;">0.10 k</div>
<div class="t" style="left:657.45px;top:1755.59px;font-size:11.5px;line-height:15px;color:#3a3c42;letter-spacing:0.209px;">0.77 %</div>
<div class="b" style="left:299.7px;top:1794.16px;width:8px;height:8px;background:#46dcc9;border-radius:50%;"></div>
<div class="t" style="left:316.80px;top:1790.86px;font-size:11.5px;line-height:15px;color:#3d8be6;letter-spacing:0.391px;">/my/clientarea.php</div>
<div class="t" style="left:582.37px;top:1790.86px;font-size:11.5px;line-height:15px;color:#3a3c42;letter-spacing:0.261px;">0.09 k</div>
<div class="t" style="left:657.45px;top:1790.86px;font-size:11.5px;line-height:15px;color:#3a3c42;letter-spacing:0.209px;">0.72 %</div>
<div class="b" style="left:299.7px;top:1829.43px;width:8px;height:8px;background:#7a7ee0;border-radius:50%;"></div>
<div class="t" style="left:316.80px;top:1826.13px;font-size:11.5px;line-height:15px;color:#3d8be6;letter-spacing:0.414px;">/favicon.ico</div>
<div class="t" style="left:582.37px;top:1826.13px;font-size:11.5px;line-height:15px;color:#3a3c42;letter-spacing:0.261px;">0.08 k</div>
<div class="t" style="left:658.87px;top:1826.13px;font-size:11.5px;line-height:15px;color:#3a3c42;letter-spacing:-0.074px;">0.61 %</div>
<div class="b" style="left:299.7px;top:1864.7px;width:8px;height:8px;background:#a678dc;border-radius:50%;"></div>
<div class="t" style="left:316.80px;top:1861.40px;font-size:11.5px;line-height:15px;color:#3d8be6;letter-spacing:0.319px;">Прочее</div>
<div class="t" style="left:582.37px;top:1861.40px;font-size:11.5px;line-height:15px;color:#3a3c42;letter-spacing:0.261px;">2.00 k</div>
<div class="t" style="left:668.68px;top:1861.40px;font-size:11.5px;line-height:15px;color:#3a3c42;letter-spacing:-0.196px;">16 %</div>
<svg style="left:0;top:0" width="1214" height="1999"><path d="M941.9 1674.3L941.90 1515.30A159 159 0 0 1 969.09 1830.96Z" fill="#8aa6f7" stroke="#8aa6f7" stroke-width=".4"/><path d="M941.9 1674.3L969.09 1830.96A159 159 0 0 1 786.31 1707.04Z" fill="#95cf75" stroke="#95cf75" stroke-width=".4"/><path d="M941.9 1674.3L786.31 1707.04A159 159 0 0 1 783.50 1660.56Z" fill="#cda0f0" stroke="#cda0f0" stroke-width=".4"/><path d="M941.9 1674.3L783.50 1660.56A159 159 0 0 1 786.10 1642.54Z" fill="#f0d264" stroke="#f0d264" stroke-width=".4"/><path d="M941.9 1674.3L786.10 1642.54A159 159 0 0 1 789.56 1628.76Z" fill="#b3c93a" stroke="#b3c93a" stroke-width=".4"/><path d="M941.9 1674.3L789.56 1628.76A159 159 0 0 1 793.36 1617.58Z" fill="#f8a968" stroke="#f8a968" stroke-width=".4"/><path d="M941.9 1674.3L793.36 1617.58A159 159 0 0 1 797.47 1607.80Z" fill="#f88a77" stroke="#f88a77" stroke-width=".4"/><path d="M941.9 1674.3L797.47 1607.80A159 159 0 0 1 800.86 1600.88Z" fill="#6fc8f5" stroke="#6fc8f5" stroke-width=".4"/><path d="M941.9 1674.3L800.86 1600.88A159 159 0 0 1 804.34 1594.57Z" fill="#46dcc9" stroke="#46dcc9" stroke-width=".4"/><path d="M941.9 1674.3L804.34 1594.57A159 159 0 0 1 807.50 1589.35Z" fill="#7a7ee0" stroke="#7a7ee0" stroke-width=".4"/><path d="M941.9 1674.3L807.50 1589.35A159 159 0 0 1 941.90 1515.30Z" fill="#a678dc" stroke="#a678dc" stroke-width=".4"/></svg>
<div class="t" style="left:275.30px;top:1935.50px;font-size:11.5px;line-height:15px;color:#3a3c42;letter-spacing:0.350px;">© 2025 Demo cabinet. Все права защищены.</div>
<div class="t" style="left:1028.83px;top:1935.50px;font-size:11.5px;line-height:15px;color:#2f7fdc;letter-spacing:0.327px;">Условия использования</div>
<div class="t" style="left:1019.00px;top:1935.50px;font-size:11.5px;line-height:15px;color:#3a3c42;">и</div>
<div class="t" style="left:837.81px;top:1935.50px;font-size:11.5px;line-height:15px;color:#2f7fdc;letter-spacing:0.309px;">Политика конфиденциальности</div>
</body></html>
